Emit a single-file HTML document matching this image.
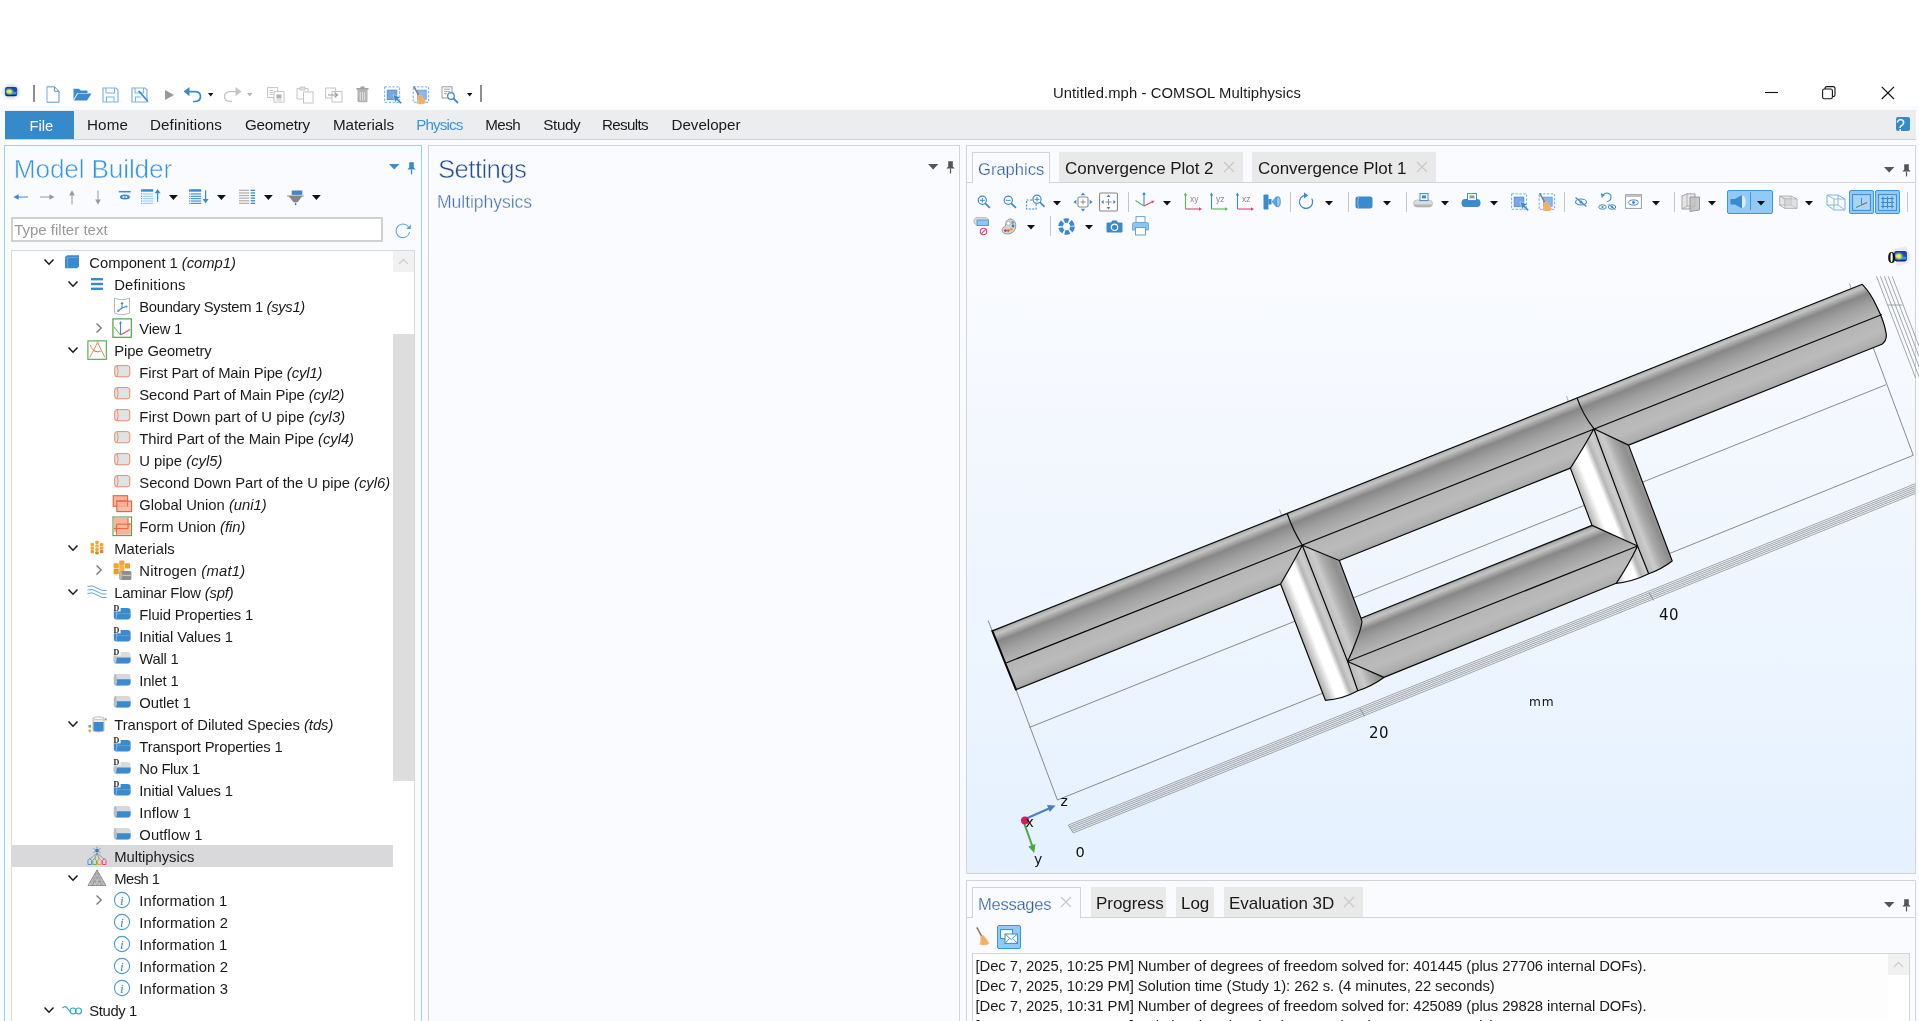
<!DOCTYPE html><html><head><meta charset="utf-8"><title>Untitled.mph - COMSOL Multiphysics</title><style>
html,body{margin:0;padding:0;}
body{width:1919px;height:1021px;overflow:hidden;background:#fafbfe;font-family:"Liberation Sans", sans-serif;position:relative;}
.t{position:absolute;white-space:pre;font-family:"Liberation Sans", sans-serif;}
i{font-style:italic}
.panel{position:absolute;background:#fafbfe;border:1px solid #d4d4d6;box-sizing:border-box;}
svg{overflow:visible}
</style></head><body><div id="w" style="position:absolute;left:0;top:0;width:1919px;height:1021px;will-change:transform">
<div style="position:absolute;left:0px;top:0px;width:1919px;height:106px;background:#fff"></div>
<svg style="position:absolute;left:0.2999999999999998px;top:81.9px" width="22.2" height="19.2" viewBox="0 0 22.2 19.2"><defs><radialGradient id="lg1y" cx="0.33" cy="0.5" r="0.5"><stop offset="0" stop-color="#fff060"/><stop offset="0.4" stop-color="#e8e858" stop-opacity="0.95"/><stop offset="0.75" stop-color="#50b8a0" stop-opacity="0.5"/><stop offset="1" stop-color="#3090c0" stop-opacity="0"/></radialGradient><linearGradient id="lg1b" x1="0" y1="0" x2="0" y2="1"><stop offset="0" stop-color="#2438a8"/><stop offset="0.5" stop-color="#1c50b8"/><stop offset="1" stop-color="#101c70"/></linearGradient><radialGradient id="lg1g" cx="0.5" cy="0.5" r="0.5"><stop offset="0.55" stop-color="#d8d8dc" stop-opacity="0.9"/><stop offset="1" stop-color="#e8e8ec" stop-opacity="0"/></radialGradient></defs><ellipse cx="11.1" cy="9.6" rx="11.1" ry="9.6" fill="url(#lg1g)"/><rect x="5" y="5" width="12.2" height="9.2" rx="2.2" fill="url(#lg1b)"/><path d="M10.49 10.059999999999999 H16.599999999999998 V12.543999999999999 H8.66Z" fill="#2a9cf0"/><rect x="5.8" y="5.6" width="10.6" height="7.999999999999999" rx="1.8" fill="url(#lg1y)"/></svg><div style="position:absolute;left:33px;top:85px;width:2px;height:16.5px;background:#8e8e8e"></div><svg style="position:absolute;left:46px;top:86px" width="14" height="17" viewBox="0 0 14 17"><path d="M1 0.8 H8.5 L13 5.3 V16.2 H1Z" fill="#fff" stroke="#5b93cc" stroke-width="1"/><path d="M8.5 0.8 V5.3 H13" fill="none" stroke="#5b93cc" stroke-width="1"/><path d="M1 1.5 V15.8" stroke="#cfe0f2" stroke-width="1.1"/></svg><svg style="position:absolute;left:73px;top:88px" width="19" height="13" viewBox="0 0 19 13"><path d="M0.5 12.5 V0.8 H6 L7.5 2.5 H14.5 V5 H5 L0.5 12.5Z" fill="#3a8ad0"/><path d="M5 5.5 H18.5 L14 12.5 H0.8Z" fill="#3a8ad0"/><path d="M4.6 5 L0.6 12" stroke="#fff" stroke-width="0.8"/></svg><svg style="position:absolute;left:102px;top:87px" width="17" height="16" viewBox="0 0 17 16"><path d="M1 1 H14 L16 3 V15 H1Z" fill="#fff" stroke="#7ab4e4" stroke-width="1.2"/><path d="M4 1 V6 H12.5 V1" fill="none" stroke="#7ab4e4" stroke-width="1.1"/><path d="M4.5 15 V10 H12 V15" fill="none" stroke="#7ab4e4" stroke-width="1.1"/></svg><svg style="position:absolute;left:131px;top:87px" width="18" height="16" viewBox="0 0 18 16"><path d="M1 1 H14 L16 3 V15 H1Z" fill="#fff" stroke="#7ab4e4" stroke-width="1.2"/><path d="M4 1 V6 H12.5 V1" fill="none" stroke="#7ab4e4" stroke-width="1.1"/><path d="M4.5 15 V10 H10" fill="none" stroke="#7ab4e4" stroke-width="1.1"/><path d="M7 4.5 L15.5 14 L17.5 15.5 L16.8 13 L8.5 3.5Z" fill="#3a8ad0"/></svg><svg style="position:absolute;left:164.5px;top:90px" width="9" height="10" viewBox="0 0 9 10"><path d="M0 0 L9 5 L0 10Z" fill="#9a9a9a"/></svg><svg style="position:absolute;left:183px;top:86px" width="19" height="17" viewBox="0 0 19 17"><path d="M7 1.5 L1.5 6 L7 10.5" fill="none" stroke="#3a8ad0" stroke-width="0"/><path d="M6.5 1 L0.5 5.6 L6.5 10.2Z" fill="#3a8ad0"/><path d="M5 5.6 H11.5 Q17.5 5.6 17.5 10.5 Q17.5 15.5 11.5 15.5 H10" fill="none" stroke="#3a8ad0" stroke-width="1.7"/></svg><svg style="position:absolute;left:208.3px;top:92.8px" width="5.4" height="3.4" viewBox="0 0 5.4 3.4"><path d="M0 0 H5.4 L2.7 3.4Z" fill="#111"/></svg><svg style="position:absolute;left:222.5px;top:86px" width="19" height="17" viewBox="0 0 19 17"><path d="M12.5 1 L18.5 5.6 L12.5 10.2Z" fill="#c4c4c4"/><path d="M14 5.6 H7.5 Q1.5 5.6 1.5 10.5 Q1.5 15.5 7.5 15.5 H9" fill="none" stroke="#c4c4c4" stroke-width="1.3"/></svg><svg style="position:absolute;left:247.0px;top:92.8px" width="5.4" height="3.4" viewBox="0 0 5.4 3.4"><path d="M0 0 H5.4 L2.7 3.4Z" fill="#b4b4b4"/></svg><svg style="position:absolute;left:266.5px;top:87px" width="18" height="16" viewBox="0 0 18 16"><rect x="0.6" y="0.6" width="10" height="10" fill="#fff" stroke="#c4c4c4" stroke-width="1"/><path d="M2.5 3.5 H6 M2.5 5.5 H6 M2.5 7.5 H6" stroke="#c4c4c4" stroke-width="1"/><rect x="7" y="4.6" width="10" height="10.5" fill="#fff" stroke="#c4c4c4" stroke-width="1"/><rect x="9.5" y="7.5" width="5" height="4" fill="#b0b0b0"/><path d="M9.5 13 H14.5" stroke="#c4c4c4" stroke-width="1"/></svg><svg style="position:absolute;left:295.5px;top:86px" width="18" height="18" viewBox="0 0 18 18"><path d="M1 2.5 H12 V13 H1Z" fill="#fff" stroke="#c4c4c4" stroke-width="1"/><path d="M4 2.5 V1 H9 V2.5 V4 H4Z" fill="#e0e0e0" stroke="#c4c4c4" stroke-width="0.9"/><rect x="7.5" y="6" width="9.5" height="11" fill="#fff" stroke="#c4c4c4" stroke-width="1"/></svg><svg style="position:absolute;left:324.5px;top:87px" width="18" height="16" viewBox="0 0 18 16"><rect x="0.6" y="1" width="10" height="10" fill="#fff" stroke="#c4c4c4" stroke-width="1"/><rect x="7" y="4.5" width="10" height="10.5" fill="#fff" stroke="#c4c4c4" stroke-width="1"/><path d="M3 8 H12 M9.5 5.5 L12.5 8 L9.5 10.5" stroke="#9a9a9a" stroke-width="1.1" fill="none"/></svg><svg style="position:absolute;left:356px;top:86px" width="13" height="17" viewBox="0 0 13 17"><path d="M1.5 4 H11.5 V15 Q11.5 16.3 10 16.3 H3 Q1.5 16.3 1.5 15Z" fill="#b4b4b4"/><rect x="0.5" y="2" width="12" height="1.8" fill="#a0a0a0"/><rect x="4.5" y="0.5" width="4" height="1.6" fill="#a0a0a0"/><path d="M4.3 6 V14.5 M6.5 6 V14.5 M8.7 6 V14.5" stroke="#e8e8e8" stroke-width="0.9"/></svg><svg style="position:absolute;left:384px;top:86px" width="18" height="18" viewBox="0 0 18 18"><rect x="0.6" y="0.9" width="15" height="15.4" fill="none" stroke="#6aaee8" stroke-width="1" stroke-dasharray="2.4 1.5"/><rect x="3.2" y="4.1" width="9.6" height="9.6" fill="#78a8e4" stroke="#4a86d0" stroke-width="0.8"/><path d="M9 8.6 L16.8 11.4 L14 12.8 L17.9 16.7 L16.5 18.1 L12.6 14.2 L11.4 17Z" fill="#3a8ad0" stroke="#fff" stroke-width="0.4"/></svg><svg style="position:absolute;left:412px;top:84px" width="19" height="21" viewBox="0 0 19 21"><rect x="1.2" y="2.9" width="15.4" height="15.4" fill="none" stroke="#6aaee8" stroke-width="1" stroke-dasharray="2.4 1.5"/><rect x="5.6" y="6.1" width="8.6" height="9.2" fill="#8ab8ee" stroke="#5a96dc" stroke-width="0.7"/><path d="M1.8 2.4 L6.9 11.6" stroke="#7a7a7a" stroke-width="1.5"/><path d="M5.4 11.4 L8.4 9.9 Q12 14 14.4 18.4 Q11 20.6 7.6 20.2 L4.6 19.4 Q6.2 15 5.4 11.4Z" fill="#f4b672"/><path d="M7 12 L8.6 19.8 M8 11.2 L11.6 19.4" stroke="#e89a4a" stroke-width="0.5" fill="none"/></svg><svg style="position:absolute;left:441px;top:86px" width="18" height="18" viewBox="0 0 18 18"><path d="M1 0.8 H11 V12 H1Z" fill="#fff" stroke="#9a9a9a" stroke-width="1"/><path d="M3 3.2 H9 M3 5.4 H9 M3 7.6 H6" stroke="#9a9a9a" stroke-width="0.9"/><circle cx="10" cy="10" r="3.3" fill="#fff" stroke="#3a8ad0" stroke-width="1.3"/><path d="M12.5 12.5 L17 17" stroke="#3a8ad0" stroke-width="1.8"/></svg><svg style="position:absolute;left:467.3px;top:92.8px" width="5.4" height="3.4" viewBox="0 0 5.4 3.4"><path d="M0 0 H5.4 L2.7 3.4Z" fill="#111"/></svg><div style="position:absolute;left:480px;top:85px;width:2px;height:16.5px;background:#8e8e8e"></div>
<div class="t " style="left:1053px;top:84.61px;font-size:14.8px;line-height:17.01px;color:#1a1a1a;letter-spacing:0.1px">Untitled.mph - COMSOL Multiphysics</div>
<svg style="position:absolute;left:1764px;top:85px" width="16" height="16" viewBox="0 0 16 16"><path d="M1 7.5 H14" stroke="#111" stroke-width="1.1"/></svg><svg style="position:absolute;left:1822px;top:86px" width="14" height="14" viewBox="0 0 14 14"><rect x="0.6" y="3" width="9.8" height="9.8" rx="1.8" fill="none" stroke="#111" stroke-width="1.1"/><path d="M3 3 V2.6 Q3 0.6 5 0.6 H11 Q13 0.6 13 2.6 V9 Q13 10.4 11 10.6" fill="none" stroke="#111" stroke-width="1.1"/></svg><svg style="position:absolute;left:1881px;top:86px" width="14" height="14" viewBox="0 0 14 14"><path d="M0.8 0.8 L13 13 M13 0.8 L0.8 13" stroke="#111" stroke-width="1.2"/></svg>
<div style="position:absolute;left:5px;top:110px;width:1911px;height:30px;background:#ecedef;border-bottom:1px solid #d2d2d4;box-sizing:border-box"></div>
<div style="position:absolute;left:5px;top:111px;width:69px;height:28px;background:#368aca"></div>
<div class="t " style="left:29.5px;top:118.11px;font-size:14.8px;line-height:17.01px;color:#fff;">File</div>
<div class="t " style="left:87px;top:116.24px;font-size:15.2px;line-height:17.46px;color:#1a1a1a;letter-spacing:0.12px">Home</div>
<div class="t " style="left:150px;top:116.24px;font-size:15.2px;line-height:17.46px;color:#1a1a1a;letter-spacing:0.1px">Definitions</div>
<div class="t " style="left:245px;top:116.24px;font-size:15.2px;line-height:17.46px;color:#1a1a1a;letter-spacing:-0.21px">Geometry</div>
<div class="t " style="left:333px;top:116.24px;font-size:15.2px;line-height:17.46px;color:#1a1a1a;letter-spacing:-0.07px">Materials</div>
<div class="t " style="left:416.3px;top:116.24px;font-size:15.2px;line-height:17.46px;color:#3f94dc;letter-spacing:-0.9px">Physics</div>
<div class="t " style="left:485.2px;top:116.24px;font-size:15.2px;line-height:17.46px;color:#1a1a1a;letter-spacing:-0.54px">Mesh</div>
<div class="t " style="left:543.3px;top:116.24px;font-size:15.2px;line-height:17.46px;color:#1a1a1a;letter-spacing:-0.37px">Study</div>
<div class="t " style="left:602px;top:116.24px;font-size:15.2px;line-height:17.46px;color:#1a1a1a;letter-spacing:-0.67px">Results</div>
<div class="t " style="left:671.5px;top:116.24px;font-size:15.2px;line-height:17.46px;color:#1a1a1a;letter-spacing:-0.03px">Developer</div>
<div style="position:absolute;left:1896px;top:117px;width:14px;height:14px;background:#368aca;border-radius:2px;color:#fff;font:bold 10px/14px "Liberation Sans", sans-serif;text-align:center">?</div>
<div class="panel" style="left:4px;top:145px;width:418px;height:890px;border-color:#9dcdf3"></div>
<div class="t " style="left:13.8px;top:154.29px;font-size:26.2px;line-height:30.10px;color:#3795e6;letter-spacing:-0.15px;-webkit-text-stroke:0.55px #fafbfe">Model Builder</div>
<svg style="position:absolute;left:389.40000000000003px;top:163.9px" width="10.4" height="5.6" viewBox="0 0 10.4 5.6"><path d="M0 0 H10.4 L5.2 5.6Z" fill="#3a8ad0"/></svg><svg style="position:absolute;left:407.40000000000003px;top:161.5px" width="9" height="13" viewBox="0 0 9 13"><path d="M2.2 0.3 H6.8 V5.6 L8.6 7.6 H0.4 L2.2 5.6Z" fill="#3a8ad0"/><path d="M4.5 7.6 V12.4" stroke="#3a8ad0" stroke-width="1.2"/></svg>
<svg style="position:absolute;left:13px;top:191.5px" width="16" height="10" viewBox="0 0 16 10"><path d="M15 5 H3" stroke="#3a8ad0" stroke-width="1"/><path d="M0.4 5 L5.6 2.2 V7.8Z" fill="#3a8ad0"/></svg><svg style="position:absolute;left:39px;top:191.5px" width="16" height="10" viewBox="0 0 16 10"><path d="M1 5 H13" stroke="#9a9a9a" stroke-width="1"/><path d="M15.6 5 L10.4 2.2 V7.8Z" fill="#9a9a9a"/></svg><svg style="position:absolute;left:67.3px;top:189.5px" width="10" height="15" viewBox="0 0 10 15"><path d="M5 14.5 V3" stroke="#9a9a9a" stroke-width="1"/><path d="M5 0.3 L2.2 5.4 H7.8Z" fill="#9a9a9a"/></svg><svg style="position:absolute;left:93.4px;top:189.8px" width="10" height="15" viewBox="0 0 10 15"><path d="M5 0.5 V12" stroke="#9a9a9a" stroke-width="1"/><path d="M5 14.7 L2.2 9.6 H7.8Z" fill="#9a9a9a"/></svg><svg style="position:absolute;left:118px;top:190px" width="14" height="11" viewBox="0 0 14 11"><path d="M0.8 1.7 H12.7" stroke="#3a8ad0" stroke-width="1.5"/><ellipse cx="6.9" cy="7.1" rx="5" ry="2.5" fill="#3a8ad0"/><ellipse cx="6.9" cy="7.1" rx="2.6" ry="1" fill="#fff"/><circle cx="6.9" cy="7.1" r="0.9" fill="#3a8ad0"/></svg><svg style="position:absolute;left:141px;top:189px" width="21" height="16" viewBox="0 0 21 16"><rect x="1.2" y="0.2" width="11" height="2.5" fill="#3a8ad0"/><rect x="0" y="0.2" width="1" height="2.5" fill="#3a8ad0"/><rect x="1.6" y="4.40" width="10.6" height="1.1" fill="#9ccaf0"/><rect x="0" y="4.40" width="0.9" height="1.1" fill="#3a8ad0"/><rect x="1.6" y="6.75" width="10.6" height="1.1" fill="#9ccaf0"/><rect x="0" y="6.75" width="0.9" height="1.1" fill="#3a8ad0"/><rect x="1.6" y="9.10" width="10.6" height="1.1" fill="#9ccaf0"/><rect x="0" y="9.10" width="0.9" height="1.1" fill="#3a8ad0"/><rect x="1.6" y="11.45" width="10.6" height="1.1" fill="#9ccaf0"/><rect x="0" y="11.45" width="0.9" height="1.1" fill="#3a8ad0"/><rect x="1.6" y="13.80" width="10.6" height="1.1" fill="#9ccaf0"/><rect x="0" y="13.80" width="0.9" height="1.1" fill="#3a8ad0"/><path d="M16.6 12.7 V2" stroke="#3a8ad0" stroke-width="1.2"/><path d="M16.6 0 L13.6 4.2 H19.6Z" fill="#3a8ad0"/></svg><svg style="position:absolute;left:169.1px;top:195.0px" width="8.8" height="5" viewBox="0 0 8.8 5"><path d="M0 0 H8.8 L4.4 5Z" fill="#111"/></svg><svg style="position:absolute;left:189px;top:189px" width="21" height="16" viewBox="0 0 21 16"><rect x="1.2" y="0.2" width="11" height="2.5" fill="#3a8ad0"/><rect x="0" y="0.2" width="1" height="2.5" fill="#3a8ad0"/><rect x="1.6" y="4.40" width="10.6" height="1.1" fill="#3a8ad0"/><rect x="0" y="4.40" width="0.9" height="1.1" fill="#3a8ad0"/><rect x="1.6" y="6.75" width="10.6" height="1.1" fill="#3a8ad0"/><rect x="0" y="6.75" width="0.9" height="1.1" fill="#3a8ad0"/><rect x="1.6" y="9.10" width="10.6" height="1.1" fill="#3a8ad0"/><rect x="0" y="9.10" width="0.9" height="1.1" fill="#3a8ad0"/><rect x="1.6" y="11.45" width="10.6" height="1.1" fill="#3a8ad0"/><rect x="0" y="11.45" width="0.9" height="1.1" fill="#3a8ad0"/><rect x="1.6" y="13.80" width="10.6" height="1.1" fill="#3a8ad0"/><rect x="0" y="13.80" width="0.9" height="1.1" fill="#3a8ad0"/><path d="M16.6 1.2 V12" stroke="#3a8ad0" stroke-width="1.2"/><path d="M16.6 14.3 L13.6 10 H19.6Z" fill="#3a8ad0"/></svg><svg style="position:absolute;left:217.0px;top:195.0px" width="8.8" height="5" viewBox="0 0 8.8 5"><path d="M0 0 H8.8 L4.4 5Z" fill="#111"/></svg><svg style="position:absolute;left:238.9px;top:189px" width="17" height="16" viewBox="0 0 17 16"><rect x="0" y="0.70" width="10.2" height="1.3" fill="#b4b4b4"/><rect x="11.7" y="0.70" width="4.4" height="1.3" fill="#3a8ad0"/><rect x="0" y="3.30" width="10.2" height="1.3" fill="#b4b4b4"/><rect x="11.7" y="3.30" width="4.4" height="1.3" fill="#3a8ad0"/><rect x="0" y="5.90" width="10.2" height="1.3" fill="#b4b4b4"/><rect x="11.7" y="5.90" width="4.4" height="1.3" fill="#3a8ad0"/><rect x="0" y="8.50" width="10.2" height="1.3" fill="#b4b4b4"/><rect x="11.7" y="8.50" width="4.4" height="1.3" fill="#3a8ad0"/><rect x="0" y="11.10" width="10.2" height="1.3" fill="#b4b4b4"/><rect x="11.7" y="11.10" width="4.4" height="1.3" fill="#3a8ad0"/><rect x="0" y="13.70" width="10.2" height="1.3" fill="#b4b4b4"/><rect x="11.7" y="13.70" width="4.4" height="1.3" fill="#3a8ad0"/></svg><svg style="position:absolute;left:264.1px;top:195.0px" width="8.8" height="5" viewBox="0 0 8.8 5"><path d="M0 0 H8.8 L4.4 5Z" fill="#111"/></svg><svg style="position:absolute;left:286.5px;top:189.5px" width="18" height="16" viewBox="0 0 18 16"><rect x="4.7" y="0.5" width="10.6" height="4.4" fill="#3a8ad0"/><path d="M0.2 5.4 H16.7 V6.6 H15 L10.5 12.3 H6.5 L2 6.6 H0.2Z" fill="#868686"/><rect x="7.9" y="12.7" width="1.4" height="2.6" fill="#3a8ad0"/></svg><svg style="position:absolute;left:312.1px;top:195.0px" width="8.8" height="5" viewBox="0 0 8.8 5"><path d="M0 0 H8.8 L4.4 5Z" fill="#111"/></svg>
<div style="position:absolute;left:11px;top:217px;width:371.5px;height:24.5px;background:#fff;border:2px solid #d0d0d0;box-sizing:border-box"></div>
<div class="t " style="left:14.2px;top:220.83px;font-size:15px;line-height:17.23px;color:#9a9a9a;">Type filter text</div>
<svg style="position:absolute;left:394px;top:221px" width="18" height="18" viewBox="0 0 18 18"><path d="M14.5 6 A6.8 6.8 0 1 0 15.6 11" fill="none" stroke="#5aa4e2" stroke-width="1.05"/><path d="M16.8 3.4 V8 H12.2Z" fill="#5aa4e2"/></svg>
<div style="position:absolute;left:11px;top:250px;width:404px;height:790px;background:#fff;border:1px solid #d9d9d9;box-sizing:border-box"></div>
<div style="position:absolute;left:393px;top:251px;width:21px;height:790px;background:#fff"></div>
<div style="position:absolute;left:393px;top:251px;width:21px;height:21px;background:#f1f1f1"></div>
<svg style="position:absolute;left:393px;top:251px" width="21" height="21"><path d="M6 13 L10.5 8.5 L15 13" stroke="#cfcfcf" stroke-width="1.3" fill="none"/></svg>
<div style="position:absolute;left:393px;top:334px;width:21px;height:447px;background:#dddddd"></div>
<svg style="position:absolute;left:42.5px;top:257px" width="12" height="10"><path d="M1.5 2.5 L6 7.2 L10.5 2.5" stroke="#1a1a1a" stroke-width="1.5" fill="none"/></svg>
<svg style="position:absolute;left:62px;top:252px" width="20" height="20" viewBox="0 0 20 20"><path d="M3 5 L5.2 3.2 H17 V14.4 L15.2 16.2 H3Z" fill="#3a8ad0"/><path d="M5.4 5.6 H16.6 M5.4 5.6 V15.8 M5.4 5.6 L3.4 7" stroke="#79b4e6" stroke-width="0.7" fill="none"/></svg>
<div class="t tr0" style="left:89.3px;top:255.01px;font-size:14.8px;line-height:17.01px;color:#1a1a1a;letter-spacing:-0.033px">Component 1 <i>(comp1)</i></div>
<svg style="position:absolute;left:67.3px;top:279px" width="12" height="10"><path d="M1.5 2.5 L6 7.2 L10.5 2.5" stroke="#1a1a1a" stroke-width="1.5" fill="none"/></svg>
<svg style="position:absolute;left:87px;top:274px" width="20" height="20" viewBox="0 0 20 20"><rect x="4" y="4" width="12" height="2.4" fill="#3a8ad0"/><rect x="4" y="8.8" width="12" height="2.4" fill="#3a8ad0"/><rect x="4" y="13.6" width="12" height="2.4" fill="#3a8ad0"/></svg>
<div class="t tr1" style="left:114.2px;top:277.01px;font-size:14.8px;line-height:17.01px;color:#1a1a1a;letter-spacing:0.22px">Definitions</div>
<svg style="position:absolute;left:111.5px;top:296px" width="20" height="20" viewBox="0 0 20 20"><path d="M2.5 2 Q10 5.5 17.5 2 V17 Q10 20.5 2.5 17 Z" fill="#fff" stroke="#b8b8b8" stroke-width="1"/><path d="M10 12 V7 M10 12 L14.5 10.5 M10 12 L6 15" stroke="#3a8ad0" stroke-width="1.1" fill="none"/><path d="M10 5.5 l-1.6 2.4 h3.2z M16 10 l-2.6 -0.6 l0.9 2.3z M5 16 l0.8 -2.6 l1.7 1.8z" fill="#3a8ad0"/></svg>
<div class="t tr2" style="left:139.3px;top:299.01px;font-size:14.8px;line-height:17.01px;color:#1a1a1a;letter-spacing:-0.33px">Boundary System 1 <i>(sys1)</i></div>
<svg style="position:absolute;left:93.5px;top:321px" width="10" height="14"><path d="M2.5 2.5 L7.2 7 L2.5 11.5" stroke="#7a7a7a" stroke-width="1.4" fill="none"/></svg>
<svg style="position:absolute;left:111.5px;top:318px" width="20" height="20" viewBox="0 0 20 20"><rect x="0.9" y="0.9" width="18.4" height="18.4" fill="#fff" stroke="#4aa840" stroke-width="1.2"/><path d="M8.5 17 V4" stroke="#3a8ad0" stroke-width="1.1"/><path d="M8.5 3 l-1.5 2.5 h3z" fill="#3a8ad0"/><path d="M8.5 17 L18 11.5" stroke="#e0446e" stroke-width="1.1"/><path d="M8.5 17 L2 9" stroke="#6cbf5a" stroke-width="1.1"/></svg>
<div class="t tr3" style="left:139.3px;top:321.01px;font-size:14.8px;line-height:17.01px;color:#1a1a1a;letter-spacing:-0.226px">View 1</div>
<svg style="position:absolute;left:67.3px;top:345px" width="12" height="10"><path d="M1.5 2.5 L6 7.2 L10.5 2.5" stroke="#1a1a1a" stroke-width="1.5" fill="none"/></svg>
<svg style="position:absolute;left:87px;top:340px" width="20" height="20" viewBox="0 0 20 20"><rect x="0.9" y="0.9" width="18.4" height="18.4" fill="#fff" stroke="#4aa840" stroke-width="1.1"/><path d="M10.4 3 L2.6 17.6 M10.8 3 L17.8 17.2 M3.2 4.8 Q5 11.6 11.6 11.8 M7 11 Q10.5 12.6 14 11" stroke="#e8785a" stroke-width="0.9" fill="none"/><circle cx="10.6" cy="2.9" r="0.9" fill="#fff" stroke="#e8785a" stroke-width="0.7"/></svg>
<div class="t tr4" style="left:114.2px;top:343.01px;font-size:14.8px;line-height:17.01px;color:#1a1a1a;letter-spacing:-0.106px">Pipe Geometry</div>
<svg style="position:absolute;left:111.5px;top:362px" width="20" height="20" viewBox="0 0 20 20"><path d="M5 3.6 H15.2 Q17.8 3.6 17.8 6.2 V12.2 Q17.8 14.8 15.2 14.8 H5 Q2.7 14.8 2.7 12.2 V6.2 Q2.7 3.6 5 3.6Z" fill="#dfe3e3" stroke="#ee8a62" stroke-width="1"/><path d="M5 3.6 Q7.4 9.2 5 14.8" stroke="#ee8a62" stroke-width="0.9" fill="none"/></svg>
<div class="t tr5" style="left:139.3px;top:365.01px;font-size:14.8px;line-height:17.01px;color:#1a1a1a;letter-spacing:-0.122px">First Part of Main Pipe <i>(cyl1)</i></div>
<svg style="position:absolute;left:111.5px;top:384px" width="20" height="20" viewBox="0 0 20 20"><path d="M5 3.6 H15.2 Q17.8 3.6 17.8 6.2 V12.2 Q17.8 14.8 15.2 14.8 H5 Q2.7 14.8 2.7 12.2 V6.2 Q2.7 3.6 5 3.6Z" fill="#dfe3e3" stroke="#ee8a62" stroke-width="1"/><path d="M5 3.6 Q7.4 9.2 5 14.8" stroke="#ee8a62" stroke-width="0.9" fill="none"/></svg>
<div class="t tr6" style="left:139.3px;top:387.01px;font-size:14.8px;line-height:17.01px;color:#1a1a1a;letter-spacing:-0.099px">Second Part of Main Pipe <i>(cyl2)</i></div>
<svg style="position:absolute;left:111.5px;top:406px" width="20" height="20" viewBox="0 0 20 20"><path d="M5 3.6 H15.2 Q17.8 3.6 17.8 6.2 V12.2 Q17.8 14.8 15.2 14.8 H5 Q2.7 14.8 2.7 12.2 V6.2 Q2.7 3.6 5 3.6Z" fill="#dfe3e3" stroke="#ee8a62" stroke-width="1"/><path d="M5 3.6 Q7.4 9.2 5 14.8" stroke="#ee8a62" stroke-width="0.9" fill="none"/></svg>
<div class="t tr7" style="left:139.3px;top:409.01px;font-size:14.8px;line-height:17.01px;color:#1a1a1a;letter-spacing:0.061px">First Down part of U pipe <i>(cyl3)</i></div>
<svg style="position:absolute;left:111.5px;top:428px" width="20" height="20" viewBox="0 0 20 20"><path d="M5 3.6 H15.2 Q17.8 3.6 17.8 6.2 V12.2 Q17.8 14.8 15.2 14.8 H5 Q2.7 14.8 2.7 12.2 V6.2 Q2.7 3.6 5 3.6Z" fill="#dfe3e3" stroke="#ee8a62" stroke-width="1"/><path d="M5 3.6 Q7.4 9.2 5 14.8" stroke="#ee8a62" stroke-width="0.9" fill="none"/></svg>
<div class="t tr8" style="left:139.3px;top:431.01px;font-size:14.8px;line-height:17.01px;color:#1a1a1a;letter-spacing:-0.047px">Third Part of the Main Pipe <i>(cyl4)</i></div>
<svg style="position:absolute;left:111.5px;top:450px" width="20" height="20" viewBox="0 0 20 20"><path d="M5 3.6 H15.2 Q17.8 3.6 17.8 6.2 V12.2 Q17.8 14.8 15.2 14.8 H5 Q2.7 14.8 2.7 12.2 V6.2 Q2.7 3.6 5 3.6Z" fill="#dfe3e3" stroke="#ee8a62" stroke-width="1"/><path d="M5 3.6 Q7.4 9.2 5 14.8" stroke="#ee8a62" stroke-width="0.9" fill="none"/></svg>
<div class="t tr9" style="left:139.3px;top:453.01px;font-size:14.8px;line-height:17.01px;color:#1a1a1a;letter-spacing:0.003px">U pipe <i>(cyl5)</i></div>
<svg style="position:absolute;left:111.5px;top:472px" width="20" height="20" viewBox="0 0 20 20"><path d="M5 3.6 H15.2 Q17.8 3.6 17.8 6.2 V12.2 Q17.8 14.8 15.2 14.8 H5 Q2.7 14.8 2.7 12.2 V6.2 Q2.7 3.6 5 3.6Z" fill="#dfe3e3" stroke="#ee8a62" stroke-width="1"/><path d="M5 3.6 Q7.4 9.2 5 14.8" stroke="#ee8a62" stroke-width="0.9" fill="none"/></svg>
<div class="t tr10" style="left:139.3px;top:475.01px;font-size:14.8px;line-height:17.01px;color:#1a1a1a;letter-spacing:-0.024px">Second Down Part of the U pipe <i>(cyl6)</i></div>
<svg style="position:absolute;left:111.5px;top:494px" width="20" height="20" viewBox="0 0 20 20"><rect x="1.2" y="1.7" width="14.4" height="10.6" fill="#f6b49c" stroke="#e8623c" stroke-width="1.1"/><rect x="4.8" y="7" width="14.8" height="10.6" fill="#f6b49c" fill-opacity="0.85" stroke="#e8623c" stroke-width="1.1"/><path d="M4.8 7 H15.6 V12.3" stroke="#e8623c" stroke-width="0.9" fill="none"/></svg>
<div class="t tr11" style="left:139.3px;top:497.01px;font-size:14.8px;line-height:17.01px;color:#1a1a1a;letter-spacing:-0.005px">Global Union <i>(uni1)</i></div>
<svg style="position:absolute;left:111.5px;top:516px" width="20" height="20" viewBox="0 0 20 20"><rect x="1" y="1" width="18.6" height="18.6" fill="#fff" stroke="#4aa840" stroke-width="1.1"/><path d="M1.8 1.8 H16.4 V7 H18.8 V18.8 H4.4 V16 H1.8Z" fill="#f6b49c"/><path d="M1.8 12.6 H16 V1.8 M4.6 18.8 V8.2 H18.8" stroke="#e8623c" stroke-width="1" fill="none"/></svg>
<div class="t tr12" style="left:139.3px;top:519.01px;font-size:14.8px;line-height:17.01px;color:#1a1a1a;letter-spacing:-0.055px">Form Union <i>(fin)</i></div>
<svg style="position:absolute;left:67.3px;top:543px" width="12" height="10"><path d="M1.5 2.5 L6 7.2 L10.5 2.5" stroke="#1a1a1a" stroke-width="1.5" fill="none"/></svg>
<svg style="position:absolute;left:87px;top:538px" width="20" height="20" viewBox="0 0 20 20"><rect x="8.3" y="2.8" width="3.4" height="3.2" rx="0.9" fill="#f0a436"/><rect x="3.6" y="5" width="3.4" height="3.2" rx="0.9" fill="#f0a436"/><rect x="13" y="5" width="3.4" height="3.2" rx="0.9" fill="#f0a436"/><rect x="8.3" y="6.3" width="3.4" height="3.2" rx="0.9" fill="#f4b044"/><rect x="3.6" y="8.5" width="3.4" height="3.2" rx="0.9" fill="#f0a436"/><rect x="13" y="8.5" width="3.4" height="3.2" rx="0.9" fill="#eea030"/><rect x="8.3" y="9.8" width="3.4" height="3.2" rx="0.9" fill="#f0a436"/><rect x="3.6" y="12" width="3.4" height="3.2" rx="0.9" fill="#ec9a2c"/><rect x="13" y="12" width="3.4" height="3.2" rx="0.9" fill="#d8862a"/><rect x="8.3" y="13.3" width="3.4" height="3.2" rx="0.9" fill="#d8862a"/></svg>
<div class="t tr13" style="left:114.2px;top:541.01px;font-size:14.8px;line-height:17.01px;color:#1a1a1a;letter-spacing:0.065px">Materials</div>
<svg style="position:absolute;left:93.5px;top:563px" width="10" height="14"><path d="M2.5 2.5 L7.2 7 L2.5 11.5" stroke="#7a7a7a" stroke-width="1.4" fill="none"/></svg>
<svg style="position:absolute;left:111.5px;top:560px" width="20" height="20" viewBox="0 0 20 20"><rect x="7.2" y="0.5" width="5.2" height="5.2" rx="0.6" fill="#f2a436"/><rect x="1.6" y="3.2" width="5.2" height="5.2" rx="0.6" fill="#f2a436"/><rect x="12.8" y="3.2" width="5.2" height="5.2" rx="0.6" fill="#eea030"/><rect x="7.2" y="5.8" width="5.2" height="5.2" rx="0.6" fill="#f5b446"/><rect x="1.6" y="9" width="5.2" height="5.2" rx="0.6" fill="#ee9a2a"/><rect x="7.2" y="11.3" width="5.2" height="5.2" rx="0.6" fill="#f2a436"/><g transform="translate(-1.6,1)"><path d="M9 11.5 Q9 10 11 10 H19.5 Q21 10 21 11.5 V17.5 Q21 19 19.5 19 H11 Q9 19 9 17.5Z" fill="#8e8e8e"/><path d="M11 10 Q9 10 9 11.5 V17.5 Q9 19 11 19 Q12.3 14.5 11 10Z" fill="#b8b8b8"/><path d="M11.8 14.3 H20.8" stroke="#d8d8d8" stroke-width="0.9"/></g></svg>
<div class="t tr14" style="left:139.3px;top:563.01px;font-size:14.8px;line-height:17.01px;color:#1a1a1a;letter-spacing:0.213px">Nitrogen <i>(mat1)</i></div>
<svg style="position:absolute;left:67.3px;top:587px" width="12" height="10"><path d="M1.5 2.5 L6 7.2 L10.5 2.5" stroke="#1a1a1a" stroke-width="1.5" fill="none"/></svg>
<svg style="position:absolute;left:87px;top:582px" width="20" height="20" viewBox="0 0 20 20"><path d="M0.5 4.5 Q5 2.5 10 6 T19.5 8.5 M0.5 8 Q5 6 10 9.5 T19.5 12 M0.5 11.5 Q5 9.5 10 13 T19.5 15.5" stroke="#5fa5dc" stroke-width="1" fill="none"/></svg>
<div class="t tr15" style="left:114.2px;top:585.01px;font-size:14.8px;line-height:17.01px;color:#1a1a1a;letter-spacing:-0.179px">Laminar Flow <i>(spf)</i></div>
<svg style="position:absolute;left:111.5px;top:604px" width="20" height="20" viewBox="0 0 20 20"><path d="M4 4 H15.5 Q18.6 4 18.6 7 V12.5 Q18.6 15.5 15.5 15.5 H4 Q1.8 15.5 1.8 12.5 V7 Q1.8 4 4 4Z" fill="#3a8ad0"/><path d="M4.2 9.6 H18.4" stroke="#6aaae0" stroke-width="0.7"/><path d="M4 4.3 Q5.8 9.7 4 15.2" stroke="#8cc0ea" stroke-width="0.8" fill="none"/><rect x="1" y="0.8" width="7.6" height="6.6" fill="#fff"/><text x="1.4" y="6.9" font-family="Liberation Serif,serif" font-size="8" font-weight="bold" fill="#222">D</text></svg>
<div class="t tr16" style="left:139.3px;top:607.01px;font-size:14.8px;line-height:17.01px;color:#1a1a1a;letter-spacing:-0.115px">Fluid Properties 1</div>
<svg style="position:absolute;left:111.5px;top:626px" width="20" height="20" viewBox="0 0 20 20"><path d="M4 4 H15.5 Q18.6 4 18.6 7 V12.5 Q18.6 15.5 15.5 15.5 H4 Q1.8 15.5 1.8 12.5 V7 Q1.8 4 4 4Z" fill="#3a8ad0"/><path d="M4.2 9.6 H18.4" stroke="#6aaae0" stroke-width="0.7"/><path d="M4 4.3 Q5.8 9.7 4 15.2" stroke="#8cc0ea" stroke-width="0.8" fill="none"/><rect x="1" y="0.8" width="7.6" height="6.6" fill="#fff"/><text x="1.4" y="6.9" font-family="Liberation Serif,serif" font-size="8" font-weight="bold" fill="#222">D</text></svg>
<div class="t tr17" style="left:139.3px;top:629.01px;font-size:14.8px;line-height:17.01px;color:#1a1a1a;letter-spacing:-0.09px">Initial Values 1</div>
<svg style="position:absolute;left:111.5px;top:648px" width="20" height="20" viewBox="0 0 20 20"><path d="M4 4 H15.5 Q18.6 4 18.6 7 V12.5 Q18.6 15.5 15.5 15.5 H4 Q1.8 15.5 1.8 12.5 V7 Q1.8 4 4 4Z" fill="#dcdcdc"/><path d="M1.8 9.6 H18.6 V12.5 Q18.6 15.5 15.5 15.5 H4 Q1.8 15.5 1.8 12.5Z" fill="#3a8ad0"/><path d="M4 4 Q1.8 4 1.8 7 V12.5 Q1.8 15.5 4 15.5 Q5.6 9.7 4 4Z" fill="#c4c4c4"/><rect x="1" y="0.8" width="7.6" height="6.6" fill="#fff"/><text x="1.4" y="6.9" font-family="Liberation Serif,serif" font-size="8" font-weight="bold" fill="#222">D</text></svg>
<div class="t tr18" style="left:139.3px;top:651.01px;font-size:14.8px;line-height:17.01px;color:#1a1a1a;letter-spacing:-0.21px">Wall 1</div>
<svg style="position:absolute;left:111.5px;top:670px" width="20" height="20" viewBox="0 0 20 20"><path d="M4 4 H15.5 Q18.6 4 18.6 7 V12.5 Q18.6 15.5 15.5 15.5 H4 Q1.8 15.5 1.8 12.5 V7 Q1.8 4 4 4Z" fill="#d8d8d8"/><path d="M4.5 9.2 H18.6 V12.5 Q18.6 15.5 15.5 15.5 H4 Q5.3 12.5 4.5 9.2Z" fill="#3a8ad0"/><path d="M4 4 Q1.8 4 1.8 7 V12.5 Q1.8 15.5 4 15.5 Q5.8 9.7 4 4Z" fill="#bcbcbc"/></svg>
<div class="t tr19" style="left:139.3px;top:673.01px;font-size:14.8px;line-height:17.01px;color:#1a1a1a;letter-spacing:-0.144px">Inlet 1</div>
<svg style="position:absolute;left:111.5px;top:692px" width="20" height="20" viewBox="0 0 20 20"><path d="M4 4 H15.5 Q18.6 4 18.6 7 V12.5 Q18.6 15.5 15.5 15.5 H4 Q1.8 15.5 1.8 12.5 V7 Q1.8 4 4 4Z" fill="#d8d8d8"/><path d="M4.5 9.2 H18.6 V12.5 Q18.6 15.5 15.5 15.5 H4 Q5.3 12.5 4.5 9.2Z" fill="#3a8ad0"/><path d="M4 4 Q1.8 4 1.8 7 V12.5 Q1.8 15.5 4 15.5 Q5.8 9.7 4 4Z" fill="#bcbcbc"/></svg>
<div class="t tr20" style="left:139.3px;top:695.01px;font-size:14.8px;line-height:17.01px;color:#1a1a1a;letter-spacing:-0.016px">Outlet 1</div>
<svg style="position:absolute;left:67.3px;top:719px" width="12" height="10"><path d="M1.5 2.5 L6 7.2 L10.5 2.5" stroke="#1a1a1a" stroke-width="1.5" fill="none"/></svg>
<svg style="position:absolute;left:87px;top:714px" width="20" height="20" viewBox="0 0 20 20"><path d="M6 4 Q11.5 2 17 4 V17 Q11.5 19 6 17Z" fill="#e8e8e8" stroke="#b0b0b0" stroke-width="0.8"/><path d="M6.5 8 H16.5 V16.6 Q11.5 18.3 6.5 16.6Z" fill="#3a8ad0"/><ellipse cx="11.5" cy="4.2" rx="5.3" ry="1.3" fill="#fff" stroke="#b0b0b0" stroke-width="0.7"/><rect x="1.5" y="11" width="2.6" height="2.6" fill="#5cb84a"/><rect x="1.5" y="15.5" width="2.6" height="2.6" fill="#e8b020"/><path d="M18.8 3.5 l1.2 2.8 h-2.4z" fill="#5cb84a"/></svg>
<div class="t tr21" style="left:114.2px;top:717.01px;font-size:14.8px;line-height:17.01px;color:#1a1a1a;letter-spacing:-0.019px">Transport of Diluted Species <i>(tds)</i></div>
<svg style="position:absolute;left:111.5px;top:736px" width="20" height="20" viewBox="0 0 20 20"><path d="M4 4 H15.5 Q18.6 4 18.6 7 V12.5 Q18.6 15.5 15.5 15.5 H4 Q1.8 15.5 1.8 12.5 V7 Q1.8 4 4 4Z" fill="#3a8ad0"/><path d="M4.2 9.6 H18.4" stroke="#6aaae0" stroke-width="0.7"/><path d="M4 4.3 Q5.8 9.7 4 15.2" stroke="#8cc0ea" stroke-width="0.8" fill="none"/><rect x="1" y="0.8" width="7.6" height="6.6" fill="#fff"/><text x="1.4" y="6.9" font-family="Liberation Serif,serif" font-size="8" font-weight="bold" fill="#222">D</text></svg>
<div class="t tr22" style="left:139.3px;top:739.01px;font-size:14.8px;line-height:17.01px;color:#1a1a1a;letter-spacing:-0.153px">Transport Properties 1</div>
<svg style="position:absolute;left:111.5px;top:758px" width="20" height="20" viewBox="0 0 20 20"><path d="M4 4 H15.5 Q18.6 4 18.6 7 V12.5 Q18.6 15.5 15.5 15.5 H4 Q1.8 15.5 1.8 12.5 V7 Q1.8 4 4 4Z" fill="#dcdcdc"/><path d="M1.8 9.6 H18.6 V12.5 Q18.6 15.5 15.5 15.5 H4 Q1.8 15.5 1.8 12.5Z" fill="#3a8ad0"/><path d="M4 4 Q1.8 4 1.8 7 V12.5 Q1.8 15.5 4 15.5 Q5.6 9.7 4 4Z" fill="#c4c4c4"/><rect x="1" y="0.8" width="7.6" height="6.6" fill="#fff"/><text x="1.4" y="6.9" font-family="Liberation Serif,serif" font-size="8" font-weight="bold" fill="#222">D</text></svg>
<div class="t tr23" style="left:139.3px;top:761.01px;font-size:14.8px;line-height:17.01px;color:#1a1a1a;letter-spacing:-0.314px">No Flux 1</div>
<svg style="position:absolute;left:111.5px;top:780px" width="20" height="20" viewBox="0 0 20 20"><path d="M4 4 H15.5 Q18.6 4 18.6 7 V12.5 Q18.6 15.5 15.5 15.5 H4 Q1.8 15.5 1.8 12.5 V7 Q1.8 4 4 4Z" fill="#3a8ad0"/><path d="M4.2 9.6 H18.4" stroke="#6aaae0" stroke-width="0.7"/><path d="M4 4.3 Q5.8 9.7 4 15.2" stroke="#8cc0ea" stroke-width="0.8" fill="none"/><rect x="1" y="0.8" width="7.6" height="6.6" fill="#fff"/><text x="1.4" y="6.9" font-family="Liberation Serif,serif" font-size="8" font-weight="bold" fill="#222">D</text></svg>
<div class="t tr24" style="left:139.3px;top:783.01px;font-size:14.8px;line-height:17.01px;color:#1a1a1a;letter-spacing:-0.09px">Initial Values 1</div>
<svg style="position:absolute;left:111.5px;top:802px" width="20" height="20" viewBox="0 0 20 20"><path d="M4 4 H15.5 Q18.6 4 18.6 7 V12.5 Q18.6 15.5 15.5 15.5 H4 Q1.8 15.5 1.8 12.5 V7 Q1.8 4 4 4Z" fill="#d8d8d8"/><path d="M4.5 9.2 H18.6 V12.5 Q18.6 15.5 15.5 15.5 H4 Q5.3 12.5 4.5 9.2Z" fill="#3a8ad0"/><path d="M4 4 Q1.8 4 1.8 7 V12.5 Q1.8 15.5 4 15.5 Q5.8 9.7 4 4Z" fill="#bcbcbc"/></svg>
<div class="t tr25" style="left:139.3px;top:805.01px;font-size:14.8px;line-height:17.01px;color:#1a1a1a;letter-spacing:0.088px">Inflow 1</div>
<svg style="position:absolute;left:111.5px;top:824px" width="20" height="20" viewBox="0 0 20 20"><path d="M4 4 H15.5 Q18.6 4 18.6 7 V12.5 Q18.6 15.5 15.5 15.5 H4 Q1.8 15.5 1.8 12.5 V7 Q1.8 4 4 4Z" fill="#d8d8d8"/><path d="M4.5 9.2 H18.6 V12.5 Q18.6 15.5 15.5 15.5 H4 Q5.3 12.5 4.5 9.2Z" fill="#3a8ad0"/><path d="M4 4 Q1.8 4 1.8 7 V12.5 Q1.8 15.5 4 15.5 Q5.8 9.7 4 4Z" fill="#bcbcbc"/></svg>
<div class="t tr26" style="left:139.3px;top:827.01px;font-size:14.8px;line-height:17.01px;color:#1a1a1a;letter-spacing:0.076px">Outflow 1</div>
<div style="position:absolute;left:12px;top:845px;width:381px;height:22px;background:#d9d9dc"></div>
<svg style="position:absolute;left:87px;top:846px" width="20" height="20" viewBox="0 0 20 20"><circle cx="10" cy="4.5" r="1.6" fill="#555"/><path d="M10 0.5 V8.5 M6.3 2.3 L13.7 6.7 M6.3 6.7 L13.7 2.3" stroke="#3a8ad0" stroke-width="0.7"/><path d="M10 7 L3 13 M10 7 L7.7 13 M10 7 L12.3 13 M10 7 L17 13" stroke="#888" stroke-width="0.8" fill="none"/><path d="M1 18.5 V14.5 L2.8 12.5 L4.6 14.5 V18.5Z" fill="none" stroke="#4a8fd8" stroke-width="1"/><path d="M5.8 18.5 V14.5 L7.6 12.5 L9.4 14.5 V18.5Z" fill="none" stroke="#58b848" stroke-width="1"/><path d="M10.6 18.5 V14.5 L12.4 12.5 L14.2 14.5 V18.5Z" fill="none" stroke="#f0a020" stroke-width="1"/><path d="M15.4 18.5 V14.5 L17.2 12.5 L19 14.5 V18.5Z" fill="none" stroke="#e040a0" stroke-width="1"/></svg>
<div class="t tr27" style="left:114.2px;top:849.01px;font-size:14.8px;line-height:17.01px;color:#1a1a1a;letter-spacing:-0.023px">Multiphysics</div>
<svg style="position:absolute;left:67.3px;top:873px" width="12" height="10"><path d="M1.5 2.5 L6 7.2 L10.5 2.5" stroke="#1a1a1a" stroke-width="1.5" fill="none"/></svg>
<svg style="position:absolute;left:87px;top:868px" width="20" height="20" viewBox="0 0 20 20"><path d="M10 2 L19 17.5 H1Z" fill="#c6c6c6" stroke="#8a8a8a" stroke-width="0.9"/><path d="M5.5 9.7 H14.5 M3.3 13.6 H16.7 M7.8 5.8 H12.2 M10 2 L5.5 17.5 M10 2 L14.5 17.5 M5.5 9.7 L10 17.5 L14.5 9.7 M3.3 13.6 L5.5 17.5 M16.7 13.6 L14.5 17.5 M7.8 5.8 L14.5 17.5 M12.2 5.8 L5.5 17.5" stroke="#8a8a8a" stroke-width="0.5" fill="none"/></svg>
<div class="t tr28" style="left:114.2px;top:871.01px;font-size:14.8px;line-height:17.01px;color:#1a1a1a;letter-spacing:-0.536px">Mesh 1</div>
<svg style="position:absolute;left:93.5px;top:893px" width="10" height="14"><path d="M2.5 2.5 L7.2 7 L2.5 11.5" stroke="#7a7a7a" stroke-width="1.4" fill="none"/></svg>
<svg style="position:absolute;left:111.5px;top:890px" width="20" height="20" viewBox="0 0 20 20"><circle cx="10" cy="10" r="7.6" fill="#fff" stroke="#4a9ad8" stroke-width="1.1"/><text x="10" y="14.6" text-anchor="middle" font-family="Liberation Serif,serif" font-style="italic" font-size="13.5" fill="#3a8ad0">i</text></svg>
<div class="t tr29" style="left:139.3px;top:893.01px;font-size:14.8px;line-height:17.01px;color:#1a1a1a;letter-spacing:0.141px">Information 1</div>
<svg style="position:absolute;left:111.5px;top:912px" width="20" height="20" viewBox="0 0 20 20"><circle cx="10" cy="10" r="7.6" fill="#fff" stroke="#4a9ad8" stroke-width="1.1"/><text x="10" y="14.6" text-anchor="middle" font-family="Liberation Serif,serif" font-style="italic" font-size="13.5" fill="#3a8ad0">i</text></svg>
<div class="t tr30" style="left:139.3px;top:915.01px;font-size:14.8px;line-height:17.01px;color:#1a1a1a;letter-spacing:0.202px">Information 2</div>
<svg style="position:absolute;left:111.5px;top:934px" width="20" height="20" viewBox="0 0 20 20"><circle cx="10" cy="10" r="7.6" fill="#fff" stroke="#4a9ad8" stroke-width="1.1"/><text x="10" y="14.6" text-anchor="middle" font-family="Liberation Serif,serif" font-style="italic" font-size="13.5" fill="#3a8ad0">i</text></svg>
<div class="t tr31" style="left:139.3px;top:937.01px;font-size:14.8px;line-height:17.01px;color:#1a1a1a;letter-spacing:0.141px">Information 1</div>
<svg style="position:absolute;left:111.5px;top:956px" width="20" height="20" viewBox="0 0 20 20"><circle cx="10" cy="10" r="7.6" fill="#fff" stroke="#4a9ad8" stroke-width="1.1"/><text x="10" y="14.6" text-anchor="middle" font-family="Liberation Serif,serif" font-style="italic" font-size="13.5" fill="#3a8ad0">i</text></svg>
<div class="t tr32" style="left:139.3px;top:959.01px;font-size:14.8px;line-height:17.01px;color:#1a1a1a;letter-spacing:0.202px">Information 2</div>
<svg style="position:absolute;left:111.5px;top:978px" width="20" height="20" viewBox="0 0 20 20"><circle cx="10" cy="10" r="7.6" fill="#fff" stroke="#4a9ad8" stroke-width="1.1"/><text x="10" y="14.6" text-anchor="middle" font-family="Liberation Serif,serif" font-style="italic" font-size="13.5" fill="#3a8ad0">i</text></svg>
<div class="t tr33" style="left:139.3px;top:981.01px;font-size:14.8px;line-height:17.01px;color:#1a1a1a;letter-spacing:0.202px">Information 3</div>
<svg style="position:absolute;left:42.5px;top:1005px" width="12" height="10"><path d="M1.5 2.5 L6 7.2 L10.5 2.5" stroke="#1a1a1a" stroke-width="1.5" fill="none"/></svg>
<svg style="position:absolute;left:62px;top:1000px" width="20" height="20" viewBox="0 0 20 20"><path d="M0.5 8 Q3 5 5.5 8.5 T9.5 12" stroke="#30a8c0" stroke-width="1.2" fill="none"/><circle cx="11" cy="11" r="3" fill="none" stroke="#30a8c0" stroke-width="1.2"/><circle cx="16.5" cy="11" r="3" fill="none" stroke="#30a8c0" stroke-width="1.2"/></svg>
<div class="t tr34" style="left:89.3px;top:1003.01px;font-size:14.8px;line-height:17.01px;color:#1a1a1a;letter-spacing:-0.355px">Study 1</div>
<div class="panel" style="left:428px;top:145px;width:532px;height:890px"></div>
<div class="t " style="left:438px;top:154.65px;font-size:25.8px;line-height:29.64px;color:#234f96;letter-spacing:-0.6px;-webkit-text-stroke:0.55px #fafbfe">Settings</div>
<div class="t " style="left:437px;top:191.57px;font-size:17.6px;line-height:20.22px;color:#4a72b8;letter-spacing:-0.06px;-webkit-text-stroke:0.3px #fafbfe">Multiphysics</div>
<svg style="position:absolute;left:927.8px;top:163.6px" width="10.4" height="5.6" viewBox="0 0 10.4 5.6"><path d="M0 0 H10.4 L5.2 5.6Z" fill="#555"/></svg><svg style="position:absolute;left:945.8px;top:161.2px" width="9" height="13" viewBox="0 0 9 13"><path d="M2.2 0.3 H6.8 V5.6 L8.6 7.6 H0.4 L2.2 5.6Z" fill="#555"/><path d="M4.5 7.6 V12.4" stroke="#555" stroke-width="1.2"/></svg>
<div class="panel" style="left:966px;top:145px;width:950px;height:729px"></div>
<div style="position:absolute;left:967px;top:182px;width:948px;height:1px;background:#d4d4d6"></div>
<div style="position:absolute;left:972px;top:152px;width:78px;height:31px;background:#fafbfe;border:1px solid #d4d4d6;border-bottom:none;box-sizing:border-box"></div>
<div class="t " style="left:978px;top:159.98px;font-size:16.6px;line-height:19.07px;color:#2b5ca8;letter-spacing:-0.02px;-webkit-text-stroke:0.25px #fafbfe">Graphics</div>
<div style="position:absolute;left:1059px;top:152px;width:184px;height:30px;background:#e9e9ea"></div>
<div class="t " style="left:1065px;top:158.62px;font-size:17px;line-height:19.53px;color:#1a1a1a;letter-spacing:-0.05px">Convergence Plot 2</div>
<svg style="position:absolute;left:1223px;top:161px" width="12" height="12" viewBox="0 0 12 12"><path d="M1 1 L11 11 M11 1 L1 11" stroke="#c8c8c8" stroke-width="1.2"/></svg>
<div style="position:absolute;left:1252px;top:152px;width:184px;height:30px;background:#e9e9ea"></div>
<div class="t " style="left:1258px;top:158.62px;font-size:17px;line-height:19.53px;color:#1a1a1a;letter-spacing:-0.05px">Convergence Plot 1</div>
<svg style="position:absolute;left:1416px;top:161px" width="12" height="12" viewBox="0 0 12 12"><path d="M1 1 L11 11 M11 1 L1 11" stroke="#c8c8c8" stroke-width="1.2"/></svg>
<svg style="position:absolute;left:1883.8px;top:166.6px" width="10.4" height="5.6" viewBox="0 0 10.4 5.6"><path d="M0 0 H10.4 L5.2 5.6Z" fill="#555"/></svg><svg style="position:absolute;left:1901.8px;top:164.2px" width="9" height="13" viewBox="0 0 9 13"><path d="M2.2 0.3 H6.8 V5.6 L8.6 7.6 H0.4 L2.2 5.6Z" fill="#555"/><path d="M4.5 7.6 V12.4" stroke="#555" stroke-width="1.2"/></svg>
<svg style="position:absolute;left:976px;top:194px" width="16" height="16" viewBox="0 0 16 16"><circle cx="6.3" cy="6.3" r="4.1" fill="#fff" stroke="#3a8ad0" stroke-width="1.2"/><path d="M9.3 9.3 L13.899999999999999 13.899999999999999" stroke="#3a8ad0" stroke-width="1.7"/><path d="M3.9 6.3 H8.7" stroke="#3a8ad0" stroke-width="1"/><path d="M6.3 3.9 V8.7" stroke="#3a8ad0" stroke-width="1"/></svg><svg style="position:absolute;left:1002px;top:194px" width="16" height="16" viewBox="0 0 16 16"><circle cx="6.3" cy="6.3" r="4.1" fill="#fff" stroke="#3a8ad0" stroke-width="1.2"/><path d="M9.3 9.3 L13.899999999999999 13.899999999999999" stroke="#3a8ad0" stroke-width="1.7"/><path d="M3.9 6.3 H8.7" stroke="#3a8ad0" stroke-width="1"/></svg><svg style="position:absolute;left:1026px;top:193px" width="20" height="18" viewBox="0 0 20 18"><rect x="0.6" y="7" width="9.5" height="9" fill="none" stroke="#3a8ad0" stroke-width="1.1" stroke-dasharray="2 1.4"/><circle cx="11" cy="6.3" r="4.1" fill="#fff" stroke="#3a8ad0" stroke-width="1.2"/><path d="M14 9.3 L18.6 13.899999999999999" stroke="#3a8ad0" stroke-width="1.7"/><path d="M8.6 6.3 H13.4" stroke="#3a8ad0" stroke-width="1"/><path d="M11 3.9 V8.7" stroke="#3a8ad0" stroke-width="1"/></svg><svg style="position:absolute;left:1053.0px;top:200.7px" width="8" height="4.6" viewBox="0 0 8 4.6"><path d="M0 0 H8 L4.0 4.6Z" fill="#111"/></svg><svg style="position:absolute;left:1073px;top:192px" width="20" height="20" viewBox="0 0 20 20"><rect x="5" y="5" width="10" height="10" rx="1.5" fill="#fff" stroke="#8a8a8a" stroke-width="1.1"/><path d="M10 7.5 V12.5 M7.5 10 H12.5" stroke="#8a8a8a" stroke-width="1"/><path d="M10 0.5 l-2.2 2.8 h4.4z M10 19.5 l-2.2 -2.8 h4.4z M0.5 10 l2.8 -2.2 v4.4z M19.5 10 l-2.8 -2.2 v4.4z" fill="#3a8ad0"/></svg><svg style="position:absolute;left:1099px;top:192px" width="19" height="20" viewBox="0 0 19 20"><rect x="0.6" y="1" width="17.8" height="18" rx="1" fill="#fff" stroke="#8a8a8a" stroke-width="1.1"/><path d="M9.5 7 V13 M6.5 10 H12.5" stroke="#8a8a8a" stroke-width="1"/><path d="M9.5 2.5 l-2 2.5 h4z M9.5 17.5 l-2 -2.5 h4z M2.2 10 l2.5 -2 v4z M16.8 10 l-2.5 -2 v4z" fill="#3a8ad0"/></svg><div style="position:absolute;left:1128px;top:192px;width:1px;height:20px;background:#c4c4c6"></div><svg style="position:absolute;left:1134px;top:192px" width="21" height="20" viewBox="0 0 21 20"><path d="M10 14 V1" stroke="#3a8ad0" stroke-width="1.1"/><path d="M10 0 l-1.8 3 h3.6z" fill="#3a8ad0"/><path d="M10 14 L1.5 8.5" stroke="#5cb84a" stroke-width="1.1"/><path d="M10 14 L19 9.5" stroke="#e0446e" stroke-width="1.1"/><path d="M20.5 8.7 l-3.3 0 l1.4 2.6z" fill="#e0446e"/></svg><svg style="position:absolute;left:1163.0px;top:200.7px" width="8" height="4.6" viewBox="0 0 8 4.6"><path d="M0 0 H8 L4.0 4.6Z" fill="#111"/></svg><svg style="position:absolute;left:1183px;top:192px" width="20" height="20" viewBox="0 0 20 20"><path d="M2.5 17 V2" stroke="#5cb84a" stroke-width="1.1"/><path d="M2.5 0.5 l-1.7 3 h3.4z" fill="#5cb84a"/><path d="M2.5 17 H17" stroke="#e0446e" stroke-width="1.1"/><path d="M19 17 l-3 -1.7 v3.4z" fill="#e0446e"/><text x="7" y="10" font-family="Liberation Sans,sans-serif" font-size="8.5" fill="#8a8a8a">xy</text></svg><svg style="position:absolute;left:1209px;top:192px" width="20" height="20" viewBox="0 0 20 20"><path d="M2.5 17 V2" stroke="#3a8ad0" stroke-width="1.1"/><path d="M2.5 0.5 l-1.7 3 h3.4z" fill="#3a8ad0"/><path d="M2.5 17 H17" stroke="#5cb84a" stroke-width="1.1"/><path d="M19 17 l-3 -1.7 v3.4z" fill="#5cb84a"/><text x="7" y="10" font-family="Liberation Sans,sans-serif" font-size="8.5" fill="#8a8a8a">yz</text></svg><svg style="position:absolute;left:1235px;top:192px" width="20" height="20" viewBox="0 0 20 20"><path d="M2.5 17 V2" stroke="#3a8ad0" stroke-width="1.1"/><path d="M2.5 0.5 l-1.7 3 h3.4z" fill="#3a8ad0"/><path d="M2.5 17 H17" stroke="#e0446e" stroke-width="1.1"/><path d="M19 17 l-3 -1.7 v3.4z" fill="#e0446e"/><text x="7" y="10" font-family="Liberation Sans,sans-serif" font-size="8.5" fill="#8a8a8a">xz</text></svg><svg style="position:absolute;left:1263px;top:194px" width="18" height="16" viewBox="0 0 18 16"><rect x="0.5" y="0.5" width="5" height="15" rx="1" fill="#3a8ad0"/><rect x="5.5" y="5" width="3" height="5.5" fill="#3a8ad0"/><path d="M8.5 7.7 L13 2.5 H15 V13 H13Z" fill="#5fa5dc"/><ellipse cx="15.3" cy="7.7" rx="2" ry="5.2" fill="#9cc8ee" stroke="#3a8ad0" stroke-width="0.8"/></svg><div style="position:absolute;left:1290px;top:192px;width:1px;height:20px;background:#c4c4c6"></div><svg style="position:absolute;left:1297px;top:192px" width="18" height="19" viewBox="0 0 18 19"><path d="M14.8 6.5 A6.6 6.6 0 1 1 8.5 3.2" fill="none" stroke="#3a8ad0" stroke-width="1.2"/><path d="M7 0.3 L11.2 3.4 L7 6.4Z" fill="#3a8ad0"/></svg><svg style="position:absolute;left:1325.0px;top:200.7px" width="8" height="4.6" viewBox="0 0 8 4.6"><path d="M0 0 H8 L4.0 4.6Z" fill="#111"/></svg><div style="position:absolute;left:1348px;top:192px;width:1px;height:20px;background:#c4c4c6"></div><svg style="position:absolute;left:1355px;top:196px" width="18" height="13" viewBox="0 0 18 13"><path d="M3 0.5 H15 Q17.5 0.5 17.5 3 V10 Q17.5 12.5 15 12.5 H3 Q0.5 12.5 0.5 10 V3 Q0.5 0.5 3 0.5Z" fill="#3a8ad0"/><path d="M3.5 1 Q1.8 6.5 3.5 12" stroke="#9cc8ee" stroke-width="0.8" fill="none"/></svg><svg style="position:absolute;left:1383.0px;top:200.7px" width="8" height="4.6" viewBox="0 0 8 4.6"><path d="M0 0 H8 L4.0 4.6Z" fill="#111"/></svg><div style="position:absolute;left:1406px;top:192px;width:1px;height:20px;background:#c4c4c6"></div><svg style="position:absolute;left:1413px;top:193px" width="20" height="16" viewBox="0 0 20 16"><path d="M4 7 H16 Q19.5 7 19.5 10.5 Q19.5 14 16 14 H4 Q0.5 14 0.5 10.5 Q0.5 7 4 7Z" fill="#dcdcdc" stroke="#bdbdbd" stroke-width="0.8"/><path d="M0.8 11.5 H19.2 Q18.5 14 16 14 H4 Q1.5 14 0.8 11.5Z" fill="#b4b4b4"/><rect x="7" y="0.6" width="8" height="7" fill="#fff" stroke="#3a8ad0" stroke-width="1"/><rect x="9" y="2.4" width="4" height="3" fill="#3a8ad0"/></svg><svg style="position:absolute;left:1441.0px;top:200.7px" width="8" height="4.6" viewBox="0 0 8 4.6"><path d="M0 0 H8 L4.0 4.6Z" fill="#111"/></svg><svg style="position:absolute;left:1461px;top:193px" width="20" height="16" viewBox="0 0 20 16"><path d="M4 6 H16 Q19.5 6 19.5 10 Q19.5 14 16 14 H4 Q0.5 14 0.5 10 Q0.5 6 4 6Z" fill="#3a8ad0"/><rect x="6.5" y="0.6" width="9" height="7" fill="#fff" stroke="#3a8ad0" stroke-width="1"/><rect x="8.5" y="2.4" width="5" height="3" fill="#9a9a9a"/></svg><svg style="position:absolute;left:1490.0px;top:200.7px" width="8" height="4.6" viewBox="0 0 8 4.6"><path d="M0 0 H8 L4.0 4.6Z" fill="#111"/></svg><svg style="position:absolute;left:1511px;top:193px" width="18" height="18" viewBox="0 0 18 18"><rect x="0.6" y="0.9" width="15" height="15.4" fill="none" stroke="#6aaee8" stroke-width="1" stroke-dasharray="2.4 1.5"/><rect x="3.2" y="4.1" width="9.6" height="9.6" fill="#78a8e4" stroke="#4a86d0" stroke-width="0.8"/><path d="M9 8.6 L16.8 11.4 L14 12.8 L17.9 16.7 L16.5 18.1 L12.6 14.2 L11.4 17Z" fill="#3a8ad0" stroke="#fff" stroke-width="0.4"/></svg><svg style="position:absolute;left:1538px;top:191px" width="19" height="21" viewBox="0 0 19 21"><rect x="1.2" y="2.9" width="15.4" height="15.4" fill="none" stroke="#6aaee8" stroke-width="1" stroke-dasharray="2.4 1.5"/><rect x="5.6" y="6.1" width="8.6" height="9.2" fill="#8ab8ee" stroke="#5a96dc" stroke-width="0.7"/><path d="M1.8 2.4 L6.9 11.6" stroke="#7a7a7a" stroke-width="1.5"/><path d="M5.4 11.4 L8.4 9.9 Q12 14 14.4 18.4 Q11 20.6 7.6 20.2 L4.6 19.4 Q6.2 15 5.4 11.4Z" fill="#f4b672"/><path d="M7 12 L8.6 19.8 M8 11.2 L11.6 19.4" stroke="#e89a4a" stroke-width="0.5" fill="none"/></svg><div style="position:absolute;left:1564px;top:192px;width:1px;height:20px;background:#c4c4c6"></div><svg style="position:absolute;left:1574px;top:197px" width="14" height="10" viewBox="0 0 14 10"><ellipse cx="7" cy="5" rx="5.5" ry="3" fill="none" stroke="#3a8ad0" stroke-width="1.1"/><circle cx="7" cy="5" r="1.5" fill="#3a8ad0"/><path d="M1.5 0.5 L12.5 9.5" stroke="#3a8ad0" stroke-width="1.2"/></svg><svg style="position:absolute;left:1598px;top:192px" width="19" height="19" viewBox="0 0 19 19"><path d="M5 3.5 A4.2 4.2 0 1 1 9 9.5" fill="none" stroke="#3a8ad0" stroke-width="1.1"/><path d="M2.8 1 L6.8 3 L3.8 5.8Z" fill="#3a8ad0"/><ellipse cx="4.5" cy="15" rx="3.8" ry="2.2" fill="none" stroke="#3a8ad0" stroke-width="1"/><circle cx="4.5" cy="15" r="1.1" fill="#3a8ad0"/><ellipse cx="14" cy="15" rx="3.8" ry="2.2" fill="none" stroke="#3a8ad0" stroke-width="1"/><circle cx="14" cy="15" r="1.1" fill="#3a8ad0"/><path d="M10.5 12.5 L17.5 17.5" stroke="#3a8ad0" stroke-width="1"/></svg><svg style="position:absolute;left:1625px;top:194px" width="17" height="15" viewBox="0 0 17 15"><rect x="0.6" y="0.6" width="15.8" height="13.8" fill="#fff" stroke="#9a9a9a" stroke-width="1"/><rect x="0.6" y="0.6" width="15.8" height="2.4" fill="#c0c0c0"/><ellipse cx="8.5" cy="8.5" rx="4.8" ry="2.6" fill="none" stroke="#3a8ad0" stroke-width="1"/><circle cx="8.5" cy="8.5" r="1.4" fill="#3a8ad0"/></svg><svg style="position:absolute;left:1652.0px;top:200.7px" width="8" height="4.6" viewBox="0 0 8 4.6"><path d="M0 0 H8 L4.0 4.6Z" fill="#111"/></svg><div style="position:absolute;left:1674px;top:192px;width:1px;height:20px;background:#c4c4c6"></div><svg style="position:absolute;left:1681px;top:193px" width="20" height="19" viewBox="0 0 20 19"><path d="M1 3 L6 0.8 H14 V13 L9 16 H1Z" fill="#e6e6e6" stroke="#9a9a9a" stroke-width="0.9"/><path d="M6 0.8 V13 H14 M6 13 L1 16" stroke="#9a9a9a" stroke-width="0.7" fill="none"/><path d="M9 4 H18.5 V17 L9 18.5Z" fill="#bdbdbd" fill-opacity="0.8" stroke="#8a8a8a" stroke-width="0.8"/></svg><svg style="position:absolute;left:1708.0px;top:200.7px" width="8" height="4.6" viewBox="0 0 8 4.6"><path d="M0 0 H8 L4.0 4.6Z" fill="#111"/></svg><div style="position:absolute;left:1727px;top:190px;width:46px;height:24px;background:#91c9f7;border:1px solid #3a96e6;border-radius:2px;box-sizing:border-box"></div><div style="position:absolute;left:1750px;top:192px;width:1px;height:18px;background:#3a96e6"></div><svg style="position:absolute;left:1730px;top:195px" width="18" height="14" viewBox="0 0 18 14"><path d="M0.5 4 H5 L12 0 V13.5 L5 9.5 H0.5Z" fill="#3a8ad0"/><path d="M12 0.3 A4.5 6.6 0 0 1 12 13.3Z" fill="#d8ecfb"/></svg><svg style="position:absolute;left:1757.0px;top:200.7px" width="8" height="4.6" viewBox="0 0 8 4.6"><path d="M0 0 H8 L4.0 4.6Z" fill="#111"/></svg><svg style="position:absolute;left:1779px;top:195px" width="19" height="14" viewBox="0 0 19 14"><path d="M0.6 1 H12 V10 H0.6Z" fill="#e4e4e4" stroke="#b0b0b0" stroke-width="0.9"/><path d="M0.6 1 L6 4 H18 V13.4 H6 V4 M12 1 L18 4 M0.6 10 L6 13.4 M12 10 L18 13.4" fill="none" stroke="#a4a4a4" stroke-width="0.9"/><rect x="6" y="4" width="12" height="9.4" fill="#d0d0d0" fill-opacity="0.6"/></svg><svg style="position:absolute;left:1805.0px;top:200.7px" width="8" height="4.6" viewBox="0 0 8 4.6"><path d="M0 0 H8 L4.0 4.6Z" fill="#111"/></svg><svg style="position:absolute;left:1826px;top:194px" width="20" height="17" viewBox="0 0 20 17"><path d="M1 1 H12 L19 5 V16 H8 L1 11Z" fill="none" stroke="#7ab4e4" stroke-width="1"/><path d="M1 1 L8 5 H19 M8 5 V16 M12 1 V11 L19 16 M1 11 H12" fill="none" stroke="#7ab4e4" stroke-width="0.9"/></svg><div style="position:absolute;left:1849px;top:190px;width:25px;height:24px;background:#91c9f7;border:1px solid #3a96e6;border-radius:2px;box-sizing:border-box"></div><svg style="position:absolute;left:1852px;top:194px" width="19" height="17" viewBox="0 0 19 17"><rect x="0.6" y="0.6" width="17.8" height="15.8" fill="#a8d4f6" stroke="#3a8ad0" stroke-width="1"/><path d="M9.5 11 V4 M9.5 11 L4 13.5 M9.5 11 L15 8.5" stroke="#3a8ad0" stroke-width="1" fill="none"/><path d="M9.5 11 L15 8.5" stroke="#e0446e" stroke-width="1"/><path d="M9.5 11 L4 13.5" stroke="#5cb84a" stroke-width="1"/></svg><div style="position:absolute;left:1875px;top:190px;width:25px;height:24px;background:#91c9f7;border:1px solid #3a96e6;border-radius:2px;box-sizing:border-box"></div><svg style="position:absolute;left:1878px;top:194px" width="19" height="17" viewBox="0 0 19 17"><rect x="0.6" y="0.6" width="17.8" height="15.8" fill="#a8d4f6" stroke="#3a8ad0" stroke-width="1"/><path d="M3 4.5 H16 M3 8.5 H16 M3 12.5 H16 M5 2.5 V14.5 M9.5 2.5 V14.5 M14 2.5 V14.5" stroke="#3a8ad0" stroke-width="1.2"/></svg><div style="position:absolute;left:1907px;top:192px;width:1px;height:20px;background:#c4c4c6"></div><svg style="position:absolute;left:973px;top:217px" width="20" height="19" viewBox="0 0 20 19"><path d="M1 2.5 L3 0.6 H13 L15.5 2.5 V8.5 H4 L1 6Z" fill="#dcdcdc" stroke="#a8a8a8" stroke-width="0.7"/><rect x="4" y="3" width="11.5" height="5.5" fill="#8ec6ee" stroke="#3a8ad0" stroke-width="0.7"/><circle cx="10.5" cy="14.5" r="3.2" fill="#fff" stroke="#e0446e" stroke-width="1.1"/><path d="M8.3 16.7 L12.7 12.3" stroke="#e0446e" stroke-width="1.1"/></svg><svg style="position:absolute;left:1001px;top:218px" width="16" height="17" viewBox="0 0 16 17"><path d="M9 0.8 Q15 1.5 14.8 8 Q14.5 15.5 6.5 16 Q0.8 16 1.2 11.5 Q1.5 9 4.5 8 Q4 2 9 0.8Z" fill="#d4d4d4" stroke="#8a8a8a" stroke-width="0.8"/><circle cx="7.3" cy="5.3" r="2" fill="#fff" stroke="#9a9a9a" stroke-width="0.6"/><circle cx="11.7" cy="4.5" r="1.4" fill="#5fa5dc"/><circle cx="12" cy="8" r="1.4" fill="#3a7ad0"/><circle cx="10.3" cy="11.3" r="1.4" fill="#f0a020"/><circle cx="7.3" cy="12.6" r="1.4" fill="#e86030"/><circle cx="4.4" cy="12.6" r="1.4" fill="#e0306e"/></svg><svg style="position:absolute;left:1027.0px;top:224.7px" width="8" height="4.6" viewBox="0 0 8 4.6"><path d="M0 0 H8 L4.0 4.6Z" fill="#111"/></svg><div style="position:absolute;left:1050px;top:216px;width:1px;height:20px;background:#c4c4c6"></div><svg style="position:absolute;left:1058px;top:218px" width="17" height="17" viewBox="0 0 17 17"><circle cx="8.5" cy="8.5" r="6" fill="none" stroke="#3a8ad0" stroke-width="4.6" stroke-dasharray="4.6 1.68"/></svg><svg style="position:absolute;left:1085.0px;top:224.7px" width="8" height="4.6" viewBox="0 0 8 4.6"><path d="M0 0 H8 L4.0 4.6Z" fill="#111"/></svg><svg style="position:absolute;left:1106px;top:220px" width="17" height="13" viewBox="0 0 17 13"><path d="M1.5 2.5 H5 L6.3 0.5 H10.7 L12 2.5 H15.5 Q16.5 2.5 16.5 3.5 V11.5 Q16.5 12.5 15.5 12.5 H1.5 Q0.5 12.5 0.5 11.5 V3.5 Q0.5 2.5 1.5 2.5Z" fill="#3a8ad0"/><circle cx="8.5" cy="7.3" r="3.2" fill="none" stroke="#fff" stroke-width="1.2"/></svg><svg style="position:absolute;left:1132px;top:216px" width="17" height="20" viewBox="0 0 17 20"><rect x="4" y="0.6" width="9" height="6" fill="#fff" stroke="#5fa5dc" stroke-width="1"/><path d="M2 6.5 H15 Q16.5 6.5 16.5 8 V14 H0.5 V8 Q0.5 6.5 2 6.5Z" fill="#8ec6ee" stroke="#5fa5dc" stroke-width="0.8"/><rect x="3.5" y="11.5" width="10" height="7.5" fill="#fff" stroke="#5fa5dc" stroke-width="1"/></svg>
<svg style="position:absolute;left:967px;top:240px" width="948" height="633" viewBox="967 240 948 633"><defs><linearGradient id="bg" x1="0" y1="0" x2="0" y2="1"><stop offset="0" stop-color="#fafbfe"/><stop offset="1" stop-color="#e5f1ff"/></linearGradient><linearGradient id="mU" gradientUnits="userSpaceOnUse" x1="992.3" y1="630.9" x2="1005.1" y2="662.9"><stop offset="0" stop-color="#7c7c7c"/><stop offset="0.04" stop-color="#b0b0b0"/><stop offset="0.13" stop-color="#c4c4c4"/><stop offset="0.34" stop-color="#878787"/><stop offset="0.62" stop-color="#9f9f9f"/><stop offset="1" stop-color="#b4b4b4"/></linearGradient><linearGradient id="mL" gradientUnits="userSpaceOnUse" x1="1006.7" y1="662.7" x2="1017.6" y2="690.1"><stop offset="0" stop-color="#b5b5b5"/><stop offset="0.5" stop-color="#bbbbbb"/><stop offset="0.85" stop-color="#aeaeae"/><stop offset="1" stop-color="#9a9a9a"/></linearGradient><linearGradient id="uU" gradientUnits="userSpaceOnUse" x1="1361.0" y1="618.2" x2="1373.6" y2="649.8"><stop offset="0" stop-color="#7c7c7c"/><stop offset="0.04" stop-color="#b0b0b0"/><stop offset="0.13" stop-color="#c4c4c4"/><stop offset="0.34" stop-color="#878787"/><stop offset="0.62" stop-color="#9f9f9f"/><stop offset="1" stop-color="#b4b4b4"/></linearGradient><linearGradient id="uL" gradientUnits="userSpaceOnUse" x1="1376.0" y1="650.2" x2="1386.7" y2="677.1"><stop offset="0" stop-color="#b5b5b5"/><stop offset="0.5" stop-color="#bbbbbb"/><stop offset="0.85" stop-color="#aeaeae"/><stop offset="1" stop-color="#9a9a9a"/></linearGradient><linearGradient id="v1L" gradientUnits="userSpaceOnUse" x1="1283.0" y1="590.0" x2="1314.6" y2="577.4"><stop offset="0" stop-color="#b4b4b4"/><stop offset="0.12" stop-color="#d0d0d0"/><stop offset="0.3" stop-color="#ffffff"/><stop offset="0.58" stop-color="#ffffff"/><stop offset="0.72" stop-color="#b6b6b6"/><stop offset="0.87" stop-color="#cecece"/><stop offset="1" stop-color="#bcbcbc"/></linearGradient><linearGradient id="v1R" gradientUnits="userSpaceOnUse" x1="1319.7" y1="590.0" x2="1349.4" y2="578.2"><stop offset="0" stop-color="#bcbcbc"/><stop offset="0.22" stop-color="#cbcbcb"/><stop offset="0.45" stop-color="#aaaaaa"/><stop offset="0.75" stop-color="#8e8e8e"/><stop offset="0.92" stop-color="#9c9c9c"/><stop offset="1" stop-color="#adadad"/></linearGradient><linearGradient id="v2L" gradientUnits="userSpaceOnUse" x1="1574.3" y1="480.0" x2="1608.7" y2="466.3"><stop offset="0" stop-color="#b4b4b4"/><stop offset="0.12" stop-color="#d0d0d0"/><stop offset="0.3" stop-color="#ffffff"/><stop offset="0.58" stop-color="#ffffff"/><stop offset="0.72" stop-color="#b6b6b6"/><stop offset="0.87" stop-color="#cecece"/><stop offset="1" stop-color="#bcbcbc"/></linearGradient><linearGradient id="v2R" gradientUnits="userSpaceOnUse" x1="1613.0" y1="480.0" x2="1640.9" y2="468.9"><stop offset="0" stop-color="#bcbcbc"/><stop offset="0.22" stop-color="#cbcbcb"/><stop offset="0.45" stop-color="#aaaaaa"/><stop offset="0.75" stop-color="#8e8e8e"/><stop offset="0.92" stop-color="#9c9c9c"/><stop offset="1" stop-color="#adadad"/></linearGradient></defs><rect x="967" y="240" width="948" height="633" fill="url(#bg)"/><path d="M988.1 620.5 L1016 689.6 L1057.4 800 L1913.3 455.3 L1873.2 347.6 M1029.5 727.4 L1885.9 384.8" stroke="#7d7d7d" stroke-width="0.9" fill="none"/><path d="M1279.5 509.5 L1281.5 515 M1566.5 396 L1568.5 402 M1849.5 283.5 L1851.5 289.5" stroke="#9a9a9a" stroke-width="0.8" fill="none"/><path d="M1068.2 825.1 L1915.3 483.7 M1069.2 826.7 L1915.3 485.7 M1070.2 828.2 L1915.3 487.6 M1071.3 829.8 L1915.3 489.6 M1072.3 831.3 L1915.3 491.5 M1073.3 832.9 L1915.3 493.5 M1068.2 825.1 L1073.3 832.9" stroke="#8c8c8c" stroke-width="0.75" fill="none"/><path d="M1068.2 825.1 L1915.3 483.7 V493.5 L1073.3 832.9Z" fill="#9a9a9a" fill-opacity="0.03"/><path d="M1070.7 829 L1915.3 488.6" stroke="#808080" stroke-opacity="0.10" stroke-width="9" stroke-dasharray="0.6 3.6" fill="none"/><path d="M1360 708.5 L1364.5 716.5 M1649 592.5 L1653.5 600.5" stroke="#8a8a8a" stroke-width="0.9"/><path d="M1876.5 276.2 L1915.6 378 M1880.4 276.2 L1919.5 378 M1884.3 276.2 L1923.4 378 M1888.2 276.2 L1927.3 378 M1892.1 276.2 L1931.2 378 M1887.7 305 H1902.4" stroke="#8a8a8a" stroke-width="0.75" fill="none"/><path d="M992.3 630.9 L1862.3 284.3 Q1871 293.5 1876.5 306 Q1879.5 310.5 1881.4 314.8 L1006.7 662.7Z" fill="url(#mU)"/><path d="M1006.7 662.7 L1881.4 314.8 Q1885.5 325 1886.3 334.4 Q1886.8 341 1881.9 344.2 L1016 689.6Z" fill="url(#mL)"/><path d="M1361 618.2 L1592 525.4 L1637.6 546 L1347.6 661.5 Q1353 650 1356.6 639.8 Q1361 629 1361.7 623.3Z" fill="url(#uU)"/><path d="M1347.6 661.5 L1637.6 546 Q1628 566 1616.2 583.3 L1383.9 677.4Z" fill="url(#uL)"/><path d="M1302.3 545.3 Q1293 563 1280.6 584 L1325.4 700.3 Q1343 699 1357.8 690.7Z" fill="url(#v1L)"/><path d="M1302.3 545.3 L1339.3 560.5 L1361 618.2 Q1361.9 623 1361.7 623.3 Q1361 629 1356.6 639.8 Q1353 650 1347.6 661.5Z" fill="url(#v1R)"/><path d="M1347.6 661.5 L1383.9 677.4 Q1372 686 1357.8 690.7Z" fill="url(#v1R)"/><path d="M1593.9 428.7 Q1584 447 1570.4 468.1 L1592 525.4 L1637.6 546Z" fill="url(#v2L)"/><path d="M1637.6 546 Q1628 566 1616.2 583.3 Q1633 581.5 1648.7 573.7Z" fill="url(#v2L)"/><path d="M1593.9 428.7 L1628.6 445.1 L1672.2 561 Q1662 569 1648.7 573.7Z" fill="url(#v2R)"/><path d="M992.3 630.9 L1862.3 284.3 Q1871 293.5 1876.5 306 Q1884.5 322 1886.3 334.4 Q1886.8 341 1881.9 344.2 L1628.6 445.1 M1570.4 468.1 L1339.3 560.5 M1280.6 584 L1016 689.6 M1006.7 662.7 L1881.4 314.8 M1287.2 513.5 Q1293 530.5 1302.3 545.3 M1577 397.9 Q1583 415 1593.9 428.7 M1302.3 545.3 Q1293 563 1280.6 584 L1325.4 700.3 Q1343 699 1357.8 690.7 Q1372 686 1383.9 677.4 M1302.3 545.3 L1339.3 560.5 L1361 618.2 Q1362.5 622 1361.7 623.3 Q1361 629 1356.6 639.8 Q1353 650 1347.6 661.5 M1302.3 545.3 L1347.6 661.5 L1357.8 690.7 M1347.6 661.5 L1383.9 677.4 M1361 618.2 L1592 525.4 M1347.6 661.5 L1637.6 546 M1383.9 677.4 L1616.2 583.3 M1593.9 428.7 Q1584 447 1570.4 468.1 L1592 525.4 L1637.6 546 M1593.9 428.7 L1628.6 445.1 L1672.2 561 Q1662 569 1648.7 573.7 Q1633 581.5 1616.2 583.3 M1593.9 428.7 L1637.6 546 L1648.7 573.7 M1637.6 546 Q1628 566 1616.2 583.3" stroke="#0a0a0a" stroke-width="1.2" fill="none" stroke-linejoin="round" stroke-linecap="round"/><path d="M992.3 630.9 L1016 689.6" stroke="#0a0a0a" stroke-width="2.1" fill="none" stroke-linecap="round"/><text x="1369" y="738" font-size="15" letter-spacing="0.4" font-family="DejaVu Sans, sans-serif" fill="#111">20</text><text x="1659" y="620" font-size="15" letter-spacing="0.4" font-family="DejaVu Sans, sans-serif" fill="#111">40</text><text x="1529" y="706" font-size="12.2" letter-spacing="1" font-family="DejaVu Sans, sans-serif" fill="#111">mm</text><text x="1075.5" y="857" font-size="14.6" font-family="DejaVu Sans, sans-serif" fill="#111">0</text><path d="M1023 820 L1049 808.5" stroke="#4a80c0" stroke-width="2"/><path d="M1055.6 805.6 L1047 805 L1049.8 812Z" fill="#4a80c0"/><path d="M1023 820 L1032.3 846" stroke="#4aa840" stroke-width="2"/><path d="M1034.2 853 L1028.3 846.5 L1035.5 844Z" fill="#4aa840"/><circle cx="1025" cy="820.5" r="4" fill="#d81b60"/><text x="1060.5" y="806" font-size="14" font-family="DejaVu Sans, sans-serif" fill="#111">z</text><text x="1025.5" y="826.5" font-size="14" font-family="DejaVu Sans, sans-serif" fill="#111">x</text><text x="1034" y="864" font-size="14" font-family="DejaVu Sans, sans-serif" fill="#111">y</text><defs><radialGradient id="mly" cx="0.33" cy="0.5" r="0.5"><stop offset="0" stop-color="#fff060"/><stop offset="0.4" stop-color="#e8e858" stop-opacity="0.95"/><stop offset="0.75" stop-color="#50b8a0" stop-opacity="0.5"/><stop offset="1" stop-color="#3090c0" stop-opacity="0"/></radialGradient><linearGradient id="mlb" x1="0" y1="0" x2="0" y2="1"><stop offset="0" stop-color="#2438a8"/><stop offset="0.5" stop-color="#1c50b8"/><stop offset="1" stop-color="#101c70"/></linearGradient></defs><path d="M1893 249 L1906 246.5 L1911 256 L1908 263 L1897 266.5 Z" fill="#e4e4e8" fill-opacity="0.7"/><rect x="1894" y="251" width="13" height="10.5" rx="2.4" fill="url(#mlb)"/><path d="M1900 256.8 H1906.4 V259.6 H1898Z" fill="#2a9cf0"/><rect x="1894.8" y="251.6" width="11.4" height="9.3" rx="2" fill="url(#mly)"/><text x="1887.4" y="263" font-size="16.5" font-weight="bold" font-family="Liberation Serif, serif" fill="#111">0</text></svg>
<div class="panel" style="left:966px;top:880px;width:950px;height:160px"></div>
<div style="position:absolute;left:967px;top:917px;width:948px;height:1px;background:#d4d4d6"></div>
<div style="position:absolute;left:972px;top:887px;width:109px;height:31px;background:#fafbfe;border:1px solid #d4d4d6;border-bottom:none;box-sizing:border-box"></div>
<div class="t " style="left:978px;top:894.98px;font-size:16.6px;line-height:19.07px;color:#2b5ca8;letter-spacing:-0.3px;-webkit-text-stroke:0.25px #fafbfe">Messages</div>
<svg style="position:absolute;left:1060px;top:896px" width="12" height="12" viewBox="0 0 12 12"><path d="M1 1 L11 11 M11 1 L1 11" stroke="#c8c8c8" stroke-width="1.2"/></svg>
<div style="position:absolute;left:1091px;top:887px;width:75px;height:30px;background:#e9e9ea"></div>
<div class="t " style="left:1096px;top:893.62px;font-size:17px;line-height:19.53px;color:#1a1a1a;letter-spacing:-0.05px">Progress</div>
<div style="position:absolute;left:1176px;top:887px;width:38px;height:30px;background:#e9e9ea"></div>
<div class="t " style="left:1181px;top:893.62px;font-size:17px;line-height:19.53px;color:#1a1a1a;letter-spacing:-0.05px">Log</div>
<div style="position:absolute;left:1224px;top:887px;width:139px;height:30px;background:#e9e9ea"></div>
<div class="t " style="left:1229px;top:893.62px;font-size:17px;line-height:19.53px;color:#1a1a1a;letter-spacing:-0.05px">Evaluation 3D</div>
<svg style="position:absolute;left:1343px;top:896px" width="12" height="12" viewBox="0 0 12 12"><path d="M1 1 L11 11 M11 1 L1 11" stroke="#c8c8c8" stroke-width="1.2"/></svg>
<svg style="position:absolute;left:1883.8px;top:901.6px" width="10.4" height="5.6" viewBox="0 0 10.4 5.6"><path d="M0 0 H10.4 L5.2 5.6Z" fill="#555"/></svg><svg style="position:absolute;left:1901.8px;top:899.2px" width="9" height="13" viewBox="0 0 9 13"><path d="M2.2 0.3 H6.8 V5.6 L8.6 7.6 H0.4 L2.2 5.6Z" fill="#555"/><path d="M4.5 7.6 V12.4" stroke="#555" stroke-width="1.2"/></svg>
<svg style="position:absolute;left:975px;top:926px" width="16" height="21" viewBox="0 0 16 21"><path d="M1.8 1.4 L6.9 10.6" stroke="#7a7a7a" stroke-width="1.5"/><path d="M5.4 10.4 L8.4 8.9 Q12 13 14.4 17.4 Q11 19.6 7.6 19.2 L4.6 18.4 Q6.2 14 5.4 10.4Z" fill="#f4b672"/><path d="M7 11 L8.6 18.8 M8 10.2 L11.6 18.4" stroke="#e89a4a" stroke-width="0.5" fill="none"/></svg><div style="position:absolute;left:997px;top:925px;width:24px;height:24px;background:#91c9f7;border:1px solid #3a96e6;border-radius:2px;box-sizing:border-box"></div><svg style="position:absolute;left:1000px;top:929px" width="18" height="16" viewBox="0 0 18 16"><rect x="0.6" y="0.6" width="12" height="9" fill="#fff" stroke="#3a8ad0" stroke-width="1"/><rect x="5" y="5" width="12.4" height="9.4" fill="#fff" stroke="#3a8ad0" stroke-width="1"/><path d="M5 5 L11.2 10.5 L17.4 5 M5 14.4 L9.5 9.5 M17.4 14.4 L12.9 9.5" fill="none" stroke="#3a8ad0" stroke-width="0.9"/></svg>
<div style="position:absolute;left:972px;top:953px;width:938px;height:80px;background:#fdfdfe;border:1px solid #d4d4d6;box-sizing:border-box"></div>
<div style="position:absolute;left:1888px;top:954px;width:21px;height:80px;background:#fff"></div>
<div style="position:absolute;left:1888px;top:954px;width:21px;height:21px;background:#f1f1f1"></div>
<svg style="position:absolute;left:1888px;top:954px" width="21" height="21"><path d="M6 13 L10.5 8.5 L15 13" stroke="#cfcfcf" stroke-width="1.3" fill="none"/></svg>
<div class="t " style="left:975.5px;top:957.51px;font-size:14.8px;line-height:17.01px;color:#1a1a1a;letter-spacing:-0.06px">[Dec 7, 2025, 10:25 PM] Number of degrees of freedom solved for: 401445 (plus 27706 internal DOFs).</div>
<div class="t " style="left:975.5px;top:977.51px;font-size:14.8px;line-height:17.01px;color:#1a1a1a;letter-spacing:-0.06px">[Dec 7, 2025, 10:29 PM] Solution time (Study 1): 262 s. (4 minutes, 22 seconds)</div>
<div class="t " style="left:975.5px;top:997.51px;font-size:14.8px;line-height:17.01px;color:#1a1a1a;letter-spacing:-0.06px">[Dec 7, 2025, 10:31 PM] Number of degrees of freedom solved for: 425089 (plus 29828 internal DOFs).</div>
<div class="t " style="left:975.5px;top:1017.51px;font-size:14.8px;line-height:17.01px;color:#1a1a1a;letter-spacing:-0.06px">[Dec 7, 2025, 10:35 PM] Solution time (Study 1): 234 s. (3 minutes, 54 seconds)</div>
</div></body></html>
